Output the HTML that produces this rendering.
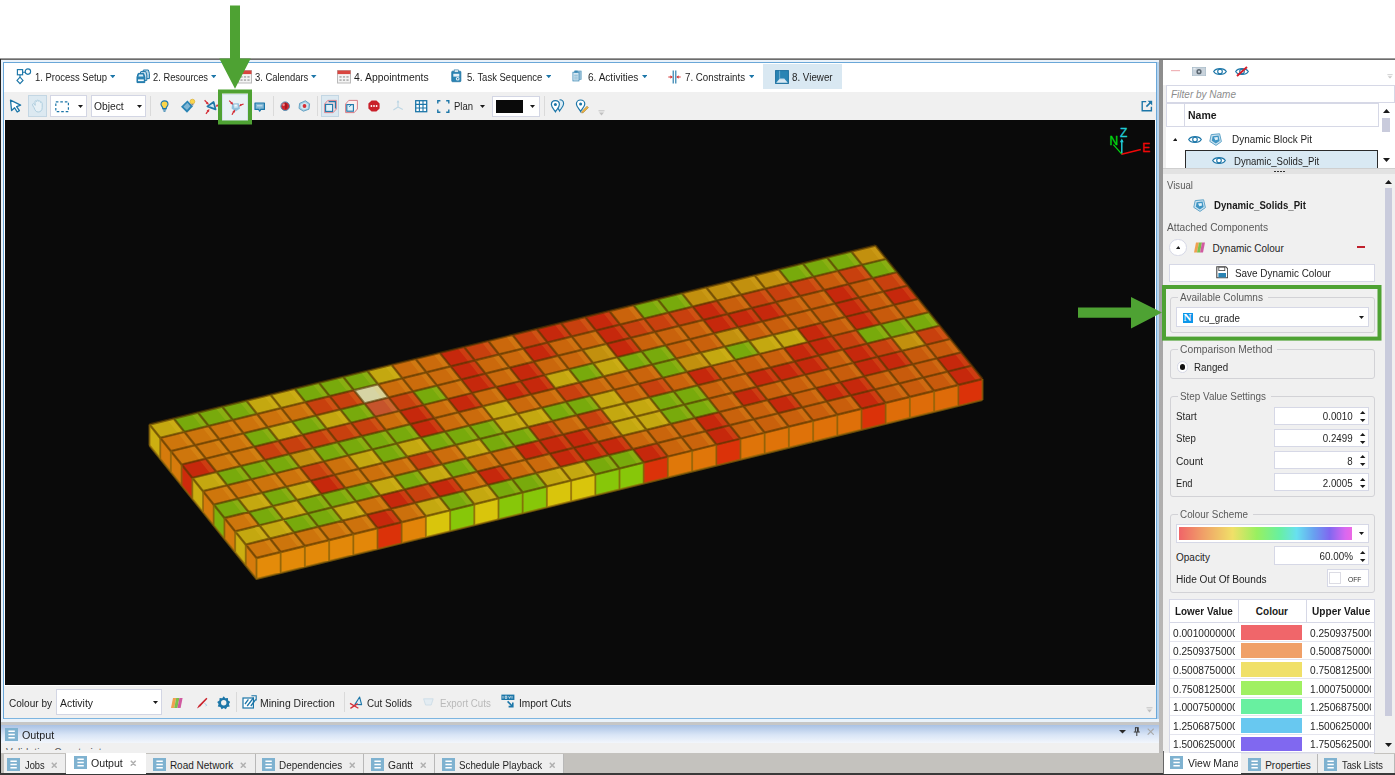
<!DOCTYPE html>
<html lang="en"><head><meta charset="utf-8"><title>Viewer - Dynamic Colour</title>
<style>
html,body{margin:0;padding:0;background:#fff;}
body{width:1395px;height:775px;position:relative;overflow:hidden;font-family:"Liberation Sans",sans-serif;}
.a{position:absolute;display:block;}
.t{position:absolute;white-space:nowrap;display:block;}
</style></head><body>
<div class="a" style="left:0px;top:58px;width:1395px;height:1px;background:#9a9a9a;"></div>
<div class="a" style="left:0px;top:59px;width:1395px;height:1px;background:#6c6c6c;"></div>
<div class="a" style="left:0px;top:59px;width:1px;height:716px;background:#222;"></div>
<div class="a" style="left:0px;top:773px;width:1395px;height:2px;background:#3a3a3a;"></div>
<div class="a" style="left:1px;top:60px;width:1158px;height:662px;background:#eaf2fa;"></div>
<div class="a" style="left:3px;top:62px;width:1154px;height:657px;background:#ffffff;border:1px solid #6aa7d8;box-sizing:border-box;"></div>
<div class="a" style="left:4px;top:92px;width:1152px;height:28px;background:#f0f0f0;"></div>
<div class="a" style="left:4.8px;top:120.4px;width:1150.4px;height:565.1px;background:#0a0a0a;"></div>
<div class="a" style="left:4px;top:685.5px;width:1152px;height:32.5px;background:#f0f0f0;"></div>
<div class="a" style="left:1157px;top:62px;width:2px;height:657px;background:#b6d3ee;"></div>
<div class="a" style="left:1159px;top:60px;width:4.2px;height:693px;background:linear-gradient(#8c8c8c,#a9a8a8 45%,#bebcba)"></div>
<div class="a" style="left:1163px;top:60px;width:232px;height:693px;background:#f0f0f0;"></div>
<div class="a" style="left:1px;top:722px;width:1158px;height:3px;background:#c6c6c6;"></div>
<div class="a" style="left:1px;top:725px;width:1158px;height:18px;background:linear-gradient(#a9c1e4,#d9e5f6 55%,#f2f6fc)"></div>
<div class="a" style="left:1px;top:743px;width:1158px;height:10px;background:#f0f0f0;"></div>
<div class="a" style="left:1px;top:753px;width:1394px;height:20px;background:#c4c2be;"></div>
<div class="a" style="left:763px;top:64px;width:78.5px;height:25px;background:#d9e8f2;"></div>
<span class="t" style="top:71px;line-height:14px;font-size:10px;color:#1e1e1e;left:34.7px;transform-origin:0 50%;transform:scaleX(0.946);">1. Process Setup</span>
<svg class="a" style="left:109.95px;top:74.9px;" width="5.5" height="3.2" viewBox="0 0 5.5 3.2"><path d="M0,0 L5.5,0 L2.75,3.2 Z" fill="#1c76a8"/></svg>
<span class="t" style="top:71px;line-height:14px;font-size:10px;color:#1e1e1e;left:153.3px;transform-origin:0 50%;transform:scaleX(0.934);">2. Resources</span>
<svg class="a" style="left:210.75px;top:74.9px;" width="5.5" height="3.2" viewBox="0 0 5.5 3.2"><path d="M0,0 L5.5,0 L2.75,3.2 Z" fill="#1c76a8"/></svg>
<span class="t" style="top:71px;line-height:14px;font-size:10px;color:#1e1e1e;left:255px;transform-origin:0 50%;transform:scaleX(0.940);">3. Calendars</span>
<svg class="a" style="left:311.25px;top:74.9px;" width="5.5" height="3.2" viewBox="0 0 5.5 3.2"><path d="M0,0 L5.5,0 L2.75,3.2 Z" fill="#1c76a8"/></svg>
<span class="t" style="top:71px;line-height:14px;font-size:10px;color:#1e1e1e;left:354.3px;transform-origin:0 50%;transform:scaleX(1.040);">4. Appointments</span>
<span class="t" style="top:71px;line-height:14px;font-size:10px;color:#1e1e1e;left:466.5px;transform-origin:0 50%;transform:scaleX(0.949);">5. Task Sequence</span>
<svg class="a" style="left:545.75px;top:74.9px;" width="5.5" height="3.2" viewBox="0 0 5.5 3.2"><path d="M0,0 L5.5,0 L2.75,3.2 Z" fill="#1c76a8"/></svg>
<span class="t" style="top:71px;line-height:14px;font-size:10px;color:#1e1e1e;left:587.9px;transform-origin:0 50%;transform:scaleX(1.006);">6. Activities</span>
<svg class="a" style="left:641.85px;top:74.9px;" width="5.5" height="3.2" viewBox="0 0 5.5 3.2"><path d="M0,0 L5.5,0 L2.75,3.2 Z" fill="#1c76a8"/></svg>
<span class="t" style="top:71px;line-height:14px;font-size:10px;color:#1e1e1e;left:685.2px;transform-origin:0 50%;transform:scaleX(0.974);">7. Constraints</span>
<svg class="a" style="left:748.95px;top:74.9px;" width="5.5" height="3.2" viewBox="0 0 5.5 3.2"><path d="M0,0 L5.5,0 L2.75,3.2 Z" fill="#1c76a8"/></svg>
<span class="t" style="top:71px;line-height:14px;font-size:10px;color:#1e1e1e;left:791.7px;transform-origin:0 50%;transform:scaleX(0.978);">8. Viewer</span>
<svg class="a" style="left:16px;top:68px;" width="16" height="17" viewBox="0 0 16 17"><g fill="none" stroke="#1c76a8" stroke-width="1.15"><rect x="1.4" y="1.6" width="5.2" height="5.2"/><circle cx="11.9" cy="3.6" r="2.7"/><path d="M6.6,4.2H9.2M4,6.8V9.2M4,9.2L7,12.4L4,15.6L1,12.4Z"/></g></svg>
<svg class="a" style="left:135.5px;top:69px;" width="14.5" height="14.5" viewBox="0 0 14.5 14.5"><g stroke="#1c76a8" stroke-width="1" stroke-linejoin="round"><path d="M6.4,4.4L7.4,1H12.4L13.4,4.4V9.6H6.4Z" fill="#b9d7e8"/><path d="M3.8,6L4.8,2.6H9.8L10.8,6V11.4H3.8Z" fill="#cfe3f0"/><path d="M1,8L2.2,4.4H7.6L8.8,8V13.6H1Z" fill="#2a84b4"/></g><path d="M2.4,7.6L3,5.6H6.8L7.4,7.6Z" fill="#d9ebf5"/><rect x="2" y="10.4" width="5.8" height="1.7" fill="#f2f8fb"/></svg>
<svg class="a" style="left:237.5px;top:70px;" width="14" height="14" viewBox="0 0 14 14"><rect x="0.5" y="0.5" width="13" height="12.5" fill="#f4f4f4" stroke="#b9b9b9"/><rect x="0.5" y="0.5" width="13" height="3.6" fill="#d8453f"/><g fill="#b5b5b5"><rect x="2.4" y="6" width="2.2" height="1.8"/><rect x="5.9" y="6" width="2.2" height="1.8"/><rect x="9.4" y="6" width="2.2" height="1.8"/><rect x="2.4" y="9.2" width="2.2" height="1.8"/><rect x="5.9" y="9.2" width="2.2" height="1.8"/><rect x="9.4" y="9.2" width="2.2" height="1.8"/></g></svg>
<svg class="a" style="left:337px;top:70px;" width="14" height="14" viewBox="0 0 14 14"><rect x="0.5" y="0.5" width="13" height="12.5" fill="#f4f4f4" stroke="#b9b9b9"/><rect x="0.5" y="0.5" width="13" height="3.6" fill="#d8453f"/><g fill="#b5b5b5"><rect x="2.4" y="6" width="2.2" height="1.8"/><rect x="5.9" y="6" width="2.2" height="1.8"/><rect x="9.4" y="6" width="2.2" height="1.8"/><rect x="2.4" y="9.2" width="2.2" height="1.8"/><rect x="5.9" y="9.2" width="2.2" height="1.8"/><rect x="9.4" y="9.2" width="2.2" height="1.8"/></g></svg>
<svg class="a" style="left:451px;top:69.3px;" width="10.6" height="14" viewBox="0 0 12 15"><rect x="0.8" y="2" width="10.4" height="12" rx="1" fill="#2a84b4" stroke="#1c6f9e" stroke-width="0.8"/><rect x="3.6" y="0.6" width="4.8" height="2.6" fill="#e8f2f8" stroke="#1c6f9e" stroke-width="0.7"/><rect x="2.6" y="5" width="6.8" height="3.2" fill="#e6f0f7"/><circle cx="7.6" cy="10.6" r="2.1" fill="#e6f0f7"/><circle cx="7.6" cy="10.6" r="0.9" fill="#1c6f9e"/></svg>
<svg class="a" style="left:572.3px;top:70.3px;" width="10.6" height="11.8" viewBox="0 0 12 14"><rect x="3.6" y="1.2" width="7" height="10" fill="#9cc3da" stroke="#5b9cbf" stroke-width="0.8"/><rect x="0.8" y="2.6" width="7.2" height="10.4" fill="#d7e8f2" stroke="#3b88b4" stroke-width="0.9"/><rect x="2.4" y="0.8" width="4" height="2.4" fill="#3b88b4"/><path d="M2.3,6.2H6.6M2.3,8.4H6.6M2.3,10.6H6.6" stroke="#5b9cbf" stroke-width="0.8"/></svg>
<svg class="a" style="left:668px;top:70px;" width="13" height="14" viewBox="0 0 13 14"><path d="M5.2,0.5V13.5M7.8,0.5V13.5" stroke="#1c76a8" stroke-width="1.1"/><path d="M0.3,7H4.2M12.7,7H8.8" stroke="#d63a3a" stroke-width="1.1"/><path d="M4.6,7L2.4,5.2V8.8ZM8.4,7L10.6,5.2V8.8Z" fill="#d63a3a"/></svg>
<svg class="a" style="left:774.5px;top:69.5px;" width="14" height="14" viewBox="0 0 14 14"><rect x="0.6" y="0.6" width="12.8" height="12.8" fill="#2a84b4" stroke="#1c6f9e" stroke-width="1"/><path d="M1.2,12.8L4.6,8.8H9.4L12.8,12.8Z" fill="#d9e8f2"/><path d="M4.6,0.8V8.8H9.4" fill="none" stroke="#8fc0dc" stroke-width="0.7"/></svg>
<svg class="a" style="left:9px;top:98.5px;" width="14" height="15" viewBox="0 0 14 15"><path d="M1.5,1.2L11.6,6.2L7.6,7.6L10.4,11.6L8.2,13L5.6,8.8L2.6,11.6Z" fill="#fff" stroke="#1c76a8" stroke-width="1.3" stroke-linejoin="round"/></svg>
<div class="a" style="left:28px;top:95px;width:18.5px;height:21.5px;background:#dce9f1;border:1px solid #c3d6e3;box-sizing:border-box;"></div>
<svg class="a" style="left:31px;top:99px;" width="13" height="14" viewBox="0 0 13 14"><path d="M3,8.5C1.5,6.5 1,5 2.2,4.6C3.2,4.3 3.8,5.6 4.2,6.4L4,2.6C4,1.4 5.6,1.4 5.7,2.6L5.9,1.8C6.1,0.7 7.6,0.9 7.6,2L7.8,2.4C8.1,1.5 9.5,1.7 9.5,2.8L9.6,3.6C10,2.9 11.2,3.1 11.2,4.2V8.6C11.2,11.4 9.6,13 7.2,13C5.2,13 4,11.6 3,8.5Z" fill="#e8f1f6" stroke="#a9cbdc" stroke-width="0.9"/></svg>
<div class="a" style="left:50.2px;top:95.2px;width:37.3px;height:21.5px;background:#ffffff;border:1px solid #d3d6e4;box-sizing:border-box;"></div>
<svg class="a" style="left:55px;top:100.5px;" width="15" height="12" viewBox="0 0 15 12"><rect x="0.8" y="0.8" width="12.6" height="9.8" fill="none" stroke="#1c76a8" stroke-width="1.2" stroke-dasharray="2.6 1.9"/></svg>
<svg class="a" style="left:78px;top:105px;" width="5" height="3" viewBox="0 0 5 3"><path d="M0,0 L5,0 L2.5,3 Z" fill="#1a1a1a"/></svg>
<div class="a" style="left:91px;top:95.2px;width:54.6px;height:21.5px;background:#ffffff;border:1px solid #d3d6e4;box-sizing:border-box;"></div>
<span class="t" style="top:100.2px;line-height:14px;font-size:10px;color:#1e1e1e;left:94px;transform-origin:0 50%;transform:scaleX(1.028);">Object</span>
<svg class="a" style="left:136.7px;top:104.8px;" width="5" height="3" viewBox="0 0 5 3"><path d="M0,0 L5,0 L2.5,3 Z" fill="#1a1a1a"/></svg>
<div class="a" style="left:150.2px;top:96px;width:1px;height:20px;background:#dadada;"></div>
<div class="a" style="left:273.2px;top:96px;width:1px;height:20px;background:#dadada;"></div>
<div class="a" style="left:316.6px;top:96px;width:1px;height:20px;background:#dadada;"></div>
<div class="a" style="left:543.8px;top:96px;width:1px;height:20px;background:#dadada;"></div>
<svg class="a" style="left:159.5px;top:100.3px;" width="9" height="12" viewBox="0 0 9 12"><path d="M4.5,0.9C2.4,0.9 1,2.4 1,4.2C1,5.7 2.1,6.5 2.7,7.6V8.6H6.3V7.6C6.9,6.5 8,5.7 8,4.2C8,2.4 6.6,0.9 4.5,0.9Z" fill="#fbd54a" stroke="#1c76a8" stroke-width="1.1"/><path d="M2.9,9.9H6.1M3.5,11.2H5.5" stroke="#1c76a8" stroke-width="1"/></svg>
<svg class="a" style="left:180px;top:98px;" width="17" height="16" viewBox="0 0 17 16"><path d="M1,8.8L7.4,2.4L13,8.2L7,14.8Z" fill="#2a84b4"/><path d="M3.4,8.8L7.4,4.8L10.4,8.2L7,12Z" fill="#7fb6d5"/><circle cx="12.4" cy="3.6" r="2.4" fill="#fbd54a" stroke="#d4a72a" stroke-width="0.6"/><rect x="11.4" y="5.8" width="2" height="1.6" fill="#8a8a8a"/></svg>
<svg class="a" style="left:202.5px;top:98.5px;" width="17" height="16" viewBox="0 0 17 16"><path d="M4.4,7.4L10.6,3L12.6,10.4Z" fill="#cfe6f3" stroke="#1c76a8" stroke-width="1.7" stroke-linejoin="round"/><g stroke="#d4303a" stroke-width="1.3"><path d="M1.6,1.2L4.6,4.4M16.2,5.8L13.6,6.6M3,14.8L5.2,11.6"/></g><path d="M6,5.8L2.8,4.8L4.8,2.8ZM12.6,7.8L14,5.2L15,7.4ZM6.4,10L6,13.2L3.6,11.6Z" fill="#d4303a"/></svg>
<div class="a" style="left:222px;top:93.5px;width:26px;height:27px;background:#e9f1f5;border:1px solid #d3e3ed;box-sizing:border-box;"></div>
<svg class="a" style="left:226.5px;top:98.5px;" width="18" height="17" viewBox="0 0 18 17"><path d="M5.2,4.4L11.6,4.2L13,9.6L8.6,12.6L4.6,9.4Z" fill="#8fc0dc"/><path d="M6.4,5.4L10.6,5.2L11.2,8.4L7.4,9.2Z" fill="#c4dfee"/><path d="M7.4,5.8L9.8,5.7L9.9,7.3L7.8,7.6Z" fill="#f2f9fc"/><g stroke="#d4303a" stroke-width="1.3"><path d="M2.2,1.6L5,4.4M16.6,5L13.4,6.2M5,15.8L7,12"/></g><path d="M6.4,5.8L3.2,4.8L5.2,2.8ZM12,7.4L13.4,4.8L14.6,6.8ZM8.2,10.6L7.8,13.8L5.4,12.4Z" fill="#d4303a"/></svg>
<svg class="a" style="left:253.5px;top:101.5px;" width="11.5" height="11" viewBox="0 0 11.5 11"><path d="M1,1H10.4V7.4H6.8L5.7,9.2L4.6,7.4H1Z" fill="#7fb6d5" stroke="#1c76a8" stroke-width="1.2" stroke-linejoin="round"/><path d="M3,3.8H8.4" stroke="#d8eaf4" stroke-width="0.9"/></svg>
<svg class="a" style="left:280.3px;top:101px;" width="10.5" height="10.5" viewBox="0 0 10.5 10.5"><circle cx="5.2" cy="5.2" r="4.3" fill="#cf262e" stroke="#4f93ba" stroke-width="1"/><path d="M5.4,1.6C7.6,2.4 7.8,7.2 5.6,8.8C4.6,6.8 4.4,3.6 5.4,1.6Z" fill="#a81820"/><circle cx="3.6" cy="3.8" r="1.2" fill="#ee8c90"/></svg>
<svg class="a" style="left:298.3px;top:100.3px;" width="12.5" height="12" viewBox="0 0 12.5 12"><path d="M1.6,3.4L7.4,0.8L11.6,3.8L11,9.2L5.4,11.2L1,8.4Z" fill="#a9d0e4" stroke="#5b9cbf" stroke-width="0.9" stroke-linejoin="round"/><path d="M3,4.4L7.2,2.6L10,4.6L9.6,8.4L5.6,9.6L2.8,7.8Z" fill="#d3e7f1"/><circle cx="6.5" cy="6" r="1.9" fill="#d62f36"/></svg>
<div class="a" style="left:320.5px;top:95px;width:18.5px;height:21.5px;background:#dce9f1;border:1px solid #c3d6e3;box-sizing:border-box;"></div>
<svg class="a" style="left:322.5px;top:98.5px;" width="15" height="15" viewBox="0 0 15 15"><path d="M1.6,5L4.8,1.4H13.4V10L10.2,13.6H1.6Z" fill="#f4d9dc" stroke="#d4707a" stroke-width="0.8"/><rect x="2.6" y="5.4" width="7" height="7" fill="#dff0f8" stroke="#1c76a8" stroke-width="1.1"/><path d="M5.6,2.6H12.4V9.6" fill="none" stroke="#1c76a8" stroke-width="1.1"/></svg>
<svg class="a" style="left:344px;top:98.5px;" width="15" height="15" viewBox="0 0 15 15"><path d="M1.6,5L4.8,1.4H13.4V10L10.2,13.6H1.6Z" fill="#fbeff0" stroke="#d4707a" stroke-width="0.9"/><rect x="2.8" y="5.6" width="6.6" height="6.6" fill="#dff0f8" stroke="#1c76a8" stroke-width="1.1"/><path d="M5.2,7.8L8,5.2" stroke="#1c76a8" stroke-width="0.9"/></svg>
<svg class="a" style="left:367.5px;top:100px;" width="12" height="12" viewBox="0 0 12 12"><path d="M3.6,0.4H8.4L11.6,3.6V8.4L8.4,11.6H3.6L0.4,8.4V3.6Z" fill="#c9202a"/><circle cx="3.4" cy="6" r="0.9" fill="#fff"/><circle cx="6" cy="6" r="0.9" fill="#fff"/><circle cx="8.6" cy="6" r="0.9" fill="#fff"/></svg>
<svg class="a" style="left:392px;top:100px;" width="12" height="12" viewBox="0 0 12 12"><path d="M6,1V7M6,7L1.4,10M6,7L10.8,9.4" stroke="#bcd6e4" stroke-width="1.1" fill="none"/><path d="M6,0L4.6,2.4H7.4Z" fill="#bcd6e4"/></svg>
<svg class="a" style="left:415px;top:100px;" width="12.5" height="12.5" viewBox="0 0 12.5 12.5"><rect x="0.7" y="0.7" width="11" height="11" fill="#fff" stroke="#1c76a8" stroke-width="1.3"/><path d="M4.4,0.7V11.7M8,0.7V11.7M0.7,4.4H11.7M0.7,8H11.7" stroke="#1c76a8" stroke-width="1.1"/></svg>
<svg class="a" style="left:437px;top:100px;" width="12.5" height="13" viewBox="0 0 12.5 13"><path d="M3.4,0.8H0.8V3.6M9.2,0.8H11.8V3.6M3.4,12.2H0.8V9.4M9.2,12.2H11.8V9.4" fill="none" stroke="#1c76a8" stroke-width="1.4"/></svg>
<span class="t" style="top:100.2px;line-height:14px;font-size:10px;color:#1e1e1e;left:454px;transform-origin:0 50%;transform:scaleX(0.949);">Plan</span>
<svg class="a" style="left:479.5px;top:104.8px;" width="5" height="3" viewBox="0 0 5 3"><path d="M0,0 L5,0 L2.5,3 Z" fill="#1a1a1a"/></svg>
<div class="a" style="left:492px;top:95.5px;width:47.5px;height:21px;background:#ffffff;border:1px solid #d3d6e4;box-sizing:border-box;"></div>
<div class="a" style="left:495.5px;top:99.5px;width:27.5px;height:13.5px;background:#0a0a0a;"></div>
<svg class="a" style="left:529.8px;top:104.8px;" width="5" height="3" viewBox="0 0 5 3"><path d="M0,0 L5,0 L2.5,3 Z" fill="#1a1a1a"/></svg>
<svg class="a" style="left:549.5px;top:99px;" width="15" height="14" viewBox="0 0 15 14"><path d="M9.6,0.8C12,0.8 13.6,2.6 13.6,4.8C13.6,7.4 10.8,9.8 9.6,12C9,10.6 8.4,10 7.8,9.2" fill="#dcecf5" stroke="#1c76a8" stroke-width="1.1"/><path d="M5.4,1.6C7.8,1.6 9.4,3.4 9.4,5.6C9.4,8.2 6.6,10.6 5.4,12.8C4.2,10.6 1.4,8.2 1.4,5.6C1.4,3.4 3,1.6 5.4,1.6Z" fill="#fff" stroke="#1c76a8" stroke-width="1.2"/><circle cx="5.4" cy="5.4" r="1.5" fill="#1c76a8"/></svg>
<svg class="a" style="left:575px;top:98.5px;" width="14" height="15" viewBox="0 0 14 15"><path d="M5.6,1C8,1 9.8,2.8 9.8,5C9.8,7.6 6.8,10.2 5.6,12.6C4.4,10.2 1.4,7.6 1.4,5C1.4,2.8 3.2,1 5.6,1Z" fill="#fff" stroke="#1c76a8" stroke-width="1.2"/><circle cx="5.6" cy="5" r="1.5" fill="#1c76a8"/><path d="M7,12.4L12,7.2L13.4,8.6L8.4,13.6L6.6,14Z" fill="#f0b43c" stroke="#8a6a2a" stroke-width="0.5"/></svg>
<svg class="a" style="left:598px;top:109.5px;" width="7" height="6" viewBox="0 0 7 6"><path d="M0.5,0.8H6.5" stroke="#c0c0c0" stroke-width="1"/><path d="M1,2.6H6L3.5,5.4Z" fill="#c0c0c0"/></svg>
<svg class="a" style="left:1140.5px;top:100px;" width="12" height="12" viewBox="0 0 12 12"><path d="M5.2,1.6H1.2V10.8H10.4V6.8" fill="none" stroke="#1c76a8" stroke-width="1.4"/><path d="M5.4,6.6L10.2,1.8" stroke="#1c76a8" stroke-width="1.6"/><path d="M6.6,0.8H11.2V5.4Z" fill="#1c76a8"/></svg>
<svg class="a" style="left:0;top:0" width="1160" height="700" viewBox="0 0 1160 700">
<g stroke-linejoin="round" style="filter:blur(0.35px)">
<polygon points="149.5,424.5 173.7,418.5 184.4,431.9 160.2,437.9" fill="#c4a810" />
<polygon points="173.7,418.5 197.9,412.6 208.6,425.9 184.4,431.9" fill="#78aa0c" />
<polygon points="197.9,412.6 222.1,406.6 232.8,420.0 208.6,425.9" fill="#78aa0c" />
<polygon points="222.1,406.6 246.3,400.6 257.0,414.0 232.8,420.0" fill="#78aa0c" />
<polygon points="246.3,400.6 270.5,394.7 281.2,408.0 257.0,414.0" fill="#c4a810" />
<polygon points="270.5,394.7 294.7,388.7 305.4,402.1 281.2,408.0" fill="#c4a810" />
<polygon points="294.7,388.7 318.9,382.7 329.6,396.1 305.4,402.1" fill="#78aa0c" />
<polygon points="318.9,382.7 343.1,376.8 353.8,390.1 329.6,396.1" fill="#78aa0c" />
<polygon points="343.1,376.8 367.3,370.8 378.0,384.2 353.8,390.1" fill="#78aa0c" />
<polygon points="367.3,370.8 391.5,364.8 402.2,378.2 378.0,384.2" fill="#c4a810" />
<polygon points="391.5,364.8 415.7,358.9 426.4,372.2 402.2,378.2" fill="#cb6c0c" />
<polygon points="415.7,358.9 439.9,352.9 450.6,366.2 426.4,372.2" fill="#cb6b0c" />
<polygon points="439.9,352.9 464.1,346.9 474.8,360.3 450.6,366.2" fill="#c6280c" />
<polygon points="464.1,346.9 488.3,341.0 499.0,354.3 474.8,360.3" fill="#c8400e" />
<polygon points="488.3,341.0 512.5,335.0 523.2,348.4 499.0,354.3" fill="#cb680c" />
<polygon points="512.5,335.0 536.7,329.0 547.4,342.4 523.2,348.4" fill="#c8400e" />
<polygon points="536.7,329.0 560.9,323.1 571.6,336.4 547.4,342.4" fill="#c6280c" />
<polygon points="560.9,323.1 585.1,317.1 595.8,330.5 571.6,336.4" fill="#c8400e" />
<polygon points="585.1,317.1 609.3,311.1 620.0,324.5 595.8,330.5" fill="#c6280c" />
<polygon points="609.3,311.1 633.5,305.2 644.2,318.5 620.0,324.5" fill="#ca630c" />
<polygon points="633.5,305.2 657.7,299.2 668.4,312.6 644.2,318.5" fill="#78aa0c" />
<polygon points="657.7,299.2 681.9,293.2 692.6,306.6 668.4,312.6" fill="#78aa0c" />
<polygon points="681.9,293.2 706.1,287.3 716.8,300.6 692.6,306.6" fill="#c2900e" />
<polygon points="706.1,287.3 730.3,281.3 741.0,294.7 716.8,300.6" fill="#c2900e" />
<polygon points="730.3,281.3 754.5,275.3 765.2,288.7 741.0,294.7" fill="#c2900e" />
<polygon points="754.5,275.3 778.7,269.4 789.4,282.7 765.2,288.7" fill="#c2900e" />
<polygon points="778.7,269.4 802.9,263.4 813.6,276.8 789.4,282.7" fill="#78aa0c" />
<polygon points="802.9,263.4 827.1,257.4 837.8,270.8 813.6,276.8" fill="#78aa0c" />
<polygon points="827.1,257.4 851.3,251.5 862.0,264.8 837.8,270.8" fill="#78aa0c" />
<polygon points="851.3,251.5 875.5,245.5 886.2,258.9 862.0,264.8" fill="#c2900e" />
<polygon points="160.2,437.9 184.4,431.9 195.1,445.2 170.9,451.2" fill="#ce760c" />
<polygon points="184.4,431.9 208.6,425.9 219.3,439.3 195.1,445.2" fill="#cd750c" />
<polygon points="208.6,425.9 232.8,420.0 243.5,433.3 219.3,439.3" fill="#cd740c" />
<polygon points="232.8,420.0 257.0,414.0 267.7,427.3 243.5,433.3" fill="#cd730c" />
<polygon points="257.0,414.0 281.2,408.0 291.9,421.4 267.7,427.3" fill="#cd720c" />
<polygon points="281.2,408.0 305.4,402.1 316.1,415.4 291.9,421.4" fill="#cc710c" />
<polygon points="305.4,402.1 329.6,396.1 340.3,409.4 316.1,415.4" fill="#c8400e" />
<polygon points="329.6,396.1 353.8,390.1 364.5,403.5 340.3,409.4" fill="#c8400e" />
<polygon points="353.8,390.1 378.0,384.2 388.7,397.5 364.5,403.5" fill="#d6d4a4" />
<polygon points="378.0,384.2 402.2,378.2 412.9,391.5 388.7,397.5" fill="#cc6d0c" />
<polygon points="402.2,378.2 426.4,372.2 437.1,385.6 412.9,391.5" fill="#cb6c0c" />
<polygon points="426.4,372.2 450.6,366.2 461.3,379.6 437.1,385.6" fill="#cb6b0c" />
<polygon points="450.6,366.2 474.8,360.3 485.5,373.6 461.3,379.6" fill="#c6280c" />
<polygon points="474.8,360.3 499.0,354.3 509.7,367.7 485.5,373.6" fill="#cb690c" />
<polygon points="499.0,354.3 523.2,348.4 533.9,361.7 509.7,367.7" fill="#cb680c" />
<polygon points="523.2,348.4 547.4,342.4 558.1,355.7 533.9,361.7" fill="#c6280c" />
<polygon points="547.4,342.4 571.6,336.4 582.3,349.8 558.1,355.7" fill="#ca660c" />
<polygon points="571.6,336.4 595.8,330.5 606.5,343.8 582.3,349.8" fill="#ca650c" />
<polygon points="595.8,330.5 620.0,324.5 630.7,337.8 606.5,343.8" fill="#c6280c" />
<polygon points="620.0,324.5 644.2,318.5 654.9,331.9 630.7,337.8" fill="#c8400e" />
<polygon points="644.2,318.5 668.4,312.6 679.1,325.9 654.9,331.9" fill="#c8400e" />
<polygon points="668.4,312.6 692.6,306.6 703.3,319.9 679.1,325.9" fill="#c8400e" />
<polygon points="692.6,306.6 716.8,300.6 727.5,314.0 703.3,319.9" fill="#c6280c" />
<polygon points="716.8,300.6 741.0,294.7 751.7,308.0 727.5,314.0" fill="#c95f0c" />
<polygon points="741.0,294.7 765.2,288.7 775.9,302.0 751.7,308.0" fill="#c8400e" />
<polygon points="765.2,288.7 789.4,282.7 800.1,296.1 775.9,302.0" fill="#c8400e" />
<polygon points="789.4,282.7 813.6,276.8 824.3,290.1 800.1,296.1" fill="#c8400e" />
<polygon points="813.6,276.8 837.8,270.8 848.5,284.1 824.3,290.1" fill="#c85b0c" />
<polygon points="837.8,270.8 862.0,264.8 872.7,278.2 848.5,284.1" fill="#c8400e" />
<polygon points="862.0,264.8 886.2,258.9 896.9,272.2 872.7,278.2" fill="#78aa0c" />
<polygon points="170.9,451.2 195.1,445.2 205.8,458.6 181.6,464.6" fill="#ce760c" />
<polygon points="195.1,445.2 219.3,439.3 230.0,452.6 205.8,458.6" fill="#cd750c" />
<polygon points="219.3,439.3 243.5,433.3 254.2,446.7 230.0,452.6" fill="#cd740c" />
<polygon points="243.5,433.3 267.7,427.3 278.4,440.7 254.2,446.7" fill="#78aa0c" />
<polygon points="267.7,427.3 291.9,421.4 302.6,434.7 278.4,440.7" fill="#c4a810" />
<polygon points="291.9,421.4 316.1,415.4 326.8,428.8 302.6,434.7" fill="#78aa0c" />
<polygon points="316.1,415.4 340.3,409.4 351.0,422.8 326.8,428.8" fill="#c4a810" />
<polygon points="340.3,409.4 364.5,403.5 375.2,416.8 351.0,422.8" fill="#78aa0c" />
<polygon points="364.5,403.5 388.7,397.5 399.4,410.9 375.2,416.8" fill="#c6542c" />
<polygon points="388.7,397.5 412.9,391.5 423.6,404.9 399.4,410.9" fill="#c8400e" />
<polygon points="412.9,391.5 437.1,385.6 447.8,398.9 423.6,404.9" fill="#78aa0c" />
<polygon points="437.1,385.6 461.3,379.6 472.0,392.9 447.8,398.9" fill="#cb6b0c" />
<polygon points="461.3,379.6 485.5,373.6 496.2,387.0 472.0,392.9" fill="#c6280c" />
<polygon points="485.5,373.6 509.7,367.7 520.4,381.0 496.2,387.0" fill="#cb690c" />
<polygon points="509.7,367.7 533.9,361.7 544.6,375.1 520.4,381.0" fill="#c6280c" />
<polygon points="533.9,361.7 558.1,355.7 568.8,369.1 544.6,375.1" fill="#ca670c" />
<polygon points="558.1,355.7 582.3,349.8 593.0,363.1 568.8,369.1" fill="#ca660c" />
<polygon points="582.3,349.8 606.5,343.8 617.2,357.2 593.0,363.1" fill="#c2900e" />
<polygon points="606.5,343.8 630.7,337.8 641.4,351.2 617.2,357.2" fill="#c6280c" />
<polygon points="630.7,337.8 654.9,331.9 665.6,345.2 641.4,351.2" fill="#ca630c" />
<polygon points="654.9,331.9 679.1,325.9 689.8,339.2 665.6,345.2" fill="#c9620c" />
<polygon points="679.1,325.9 703.3,319.9 714.0,333.3 689.8,339.2" fill="#c9610c" />
<polygon points="703.3,319.9 727.5,314.0 738.2,327.3 714.0,333.3" fill="#c6280c" />
<polygon points="727.5,314.0 751.7,308.0 762.4,321.4 738.2,327.3" fill="#c6280c" />
<polygon points="751.7,308.0 775.9,302.0 786.6,315.4 762.4,321.4" fill="#c6280c" />
<polygon points="775.9,302.0 800.1,296.1 810.8,309.4 786.6,315.4" fill="#c85d0c" />
<polygon points="800.1,296.1 824.3,290.1 835.0,303.4 810.8,309.4" fill="#c85c0c" />
<polygon points="824.3,290.1 848.5,284.1 859.2,297.5 835.0,303.4" fill="#c6280c" />
<polygon points="848.5,284.1 872.7,278.2 883.4,291.5 859.2,297.5" fill="#c85a0c" />
<polygon points="872.7,278.2 896.9,272.2 907.6,285.6 883.4,291.5" fill="#c8400e" />
<polygon points="181.6,464.6 205.8,458.6 216.5,471.9 192.3,477.9" fill="#c6280c" />
<polygon points="205.8,458.6 230.0,452.6 240.7,466.0 216.5,471.9" fill="#cd750c" />
<polygon points="230.0,452.6 254.2,446.7 264.9,460.0 240.7,466.0" fill="#cd740c" />
<polygon points="254.2,446.7 278.4,440.7 289.1,454.0 264.9,460.0" fill="#c8400e" />
<polygon points="278.4,440.7 302.6,434.7 313.3,448.1 289.1,454.0" fill="#c8400e" />
<polygon points="302.6,434.7 326.8,428.8 337.5,442.1 313.3,448.1" fill="#c8400e" />
<polygon points="326.8,428.8 351.0,422.8 361.7,436.1 337.5,442.1" fill="#c8400e" />
<polygon points="351.0,422.8 375.2,416.8 385.9,430.2 361.7,436.1" fill="#c8400e" />
<polygon points="375.2,416.8 399.4,410.9 410.1,424.2 385.9,430.2" fill="#cc6e0c" />
<polygon points="399.4,410.9 423.6,404.9 434.3,418.2 410.1,424.2" fill="#c6280c" />
<polygon points="423.6,404.9 447.8,398.9 458.5,412.3 434.3,418.2" fill="#cb6c0c" />
<polygon points="447.8,398.9 472.0,392.9 482.7,406.3 458.5,412.3" fill="#c6280c" />
<polygon points="472.0,392.9 496.2,387.0 506.9,400.3 482.7,406.3" fill="#cb6a0c" />
<polygon points="496.2,387.0 520.4,381.0 531.1,394.4 506.9,400.3" fill="#c6280c" />
<polygon points="520.4,381.0 544.6,375.1 555.3,388.4 531.1,394.4" fill="#c6280c" />
<polygon points="544.6,375.1 568.8,369.1 579.5,382.4 555.3,388.4" fill="#c4a810" />
<polygon points="568.8,369.1 593.0,363.1 603.7,376.5 579.5,382.4" fill="#78aa0c" />
<polygon points="593.0,363.1 617.2,357.2 627.9,370.5 603.7,376.5" fill="#c4a810" />
<polygon points="617.2,357.2 641.4,351.2 652.1,364.5 627.9,370.5" fill="#78aa0c" />
<polygon points="641.4,351.2 665.6,345.2 676.3,358.6 652.1,364.5" fill="#78aa0c" />
<polygon points="665.6,345.2 689.8,339.2 700.5,352.6 676.3,358.6" fill="#c9620c" />
<polygon points="689.8,339.2 714.0,333.3 724.7,346.6 700.5,352.6" fill="#c9610c" />
<polygon points="714.0,333.3 738.2,327.3 748.9,340.7 724.7,346.6" fill="#c2900e" />
<polygon points="738.2,327.3 762.4,321.4 773.1,334.7 748.9,340.7" fill="#c95f0c" />
<polygon points="762.4,321.4 786.6,315.4 797.3,328.7 773.1,334.7" fill="#c95e0c" />
<polygon points="786.6,315.4 810.8,309.4 821.5,322.8 797.3,328.7" fill="#c85d0c" />
<polygon points="810.8,309.4 835.0,303.4 845.7,316.8 821.5,322.8" fill="#c85c0c" />
<polygon points="835.0,303.4 859.2,297.5 869.9,310.8 845.7,316.8" fill="#c6280c" />
<polygon points="859.2,297.5 883.4,291.5 894.1,304.9 869.9,310.8" fill="#c85a0c" />
<polygon points="883.4,291.5 907.6,285.6 918.3,298.9 894.1,304.9" fill="#c6280c" />
<polygon points="192.3,477.9 216.5,471.9 227.2,485.3 203.0,491.2" fill="#c4a810" />
<polygon points="216.5,471.9 240.7,466.0 251.4,479.3 227.2,485.3" fill="#78aa0c" />
<polygon points="240.7,466.0 264.9,460.0 275.6,473.4 251.4,479.3" fill="#78aa0c" />
<polygon points="264.9,460.0 289.1,454.0 299.8,467.4 275.6,473.4" fill="#78aa0c" />
<polygon points="289.1,454.0 313.3,448.1 324.0,461.4 299.8,467.4" fill="#c2900e" />
<polygon points="313.3,448.1 337.5,442.1 348.2,455.4 324.0,461.4" fill="#78aa0c" />
<polygon points="337.5,442.1 361.7,436.1 372.4,449.5 348.2,455.4" fill="#78aa0c" />
<polygon points="361.7,436.1 385.9,430.2 396.6,443.5 372.4,449.5" fill="#78aa0c" />
<polygon points="385.9,430.2 410.1,424.2 420.8,437.6 396.6,443.5" fill="#78aa0c" />
<polygon points="410.1,424.2 434.3,418.2 445.0,431.6 420.8,437.6" fill="#c6280c" />
<polygon points="434.3,418.2 458.5,412.3 469.2,425.6 445.0,431.6" fill="#cb6c0c" />
<polygon points="458.5,412.3 482.7,406.3 493.4,419.6 469.2,425.6" fill="#cb6b0c" />
<polygon points="482.7,406.3 506.9,400.3 517.6,413.7 493.4,419.6" fill="#c4a810" />
<polygon points="506.9,400.3 531.1,394.4 541.8,407.7 517.6,413.7" fill="#cb690c" />
<polygon points="531.1,394.4 555.3,388.4 566.0,401.8 541.8,407.7" fill="#cb680c" />
<polygon points="555.3,388.4 579.5,382.4 590.2,395.8 566.0,401.8" fill="#c8400e" />
<polygon points="579.5,382.4 603.7,376.5 614.4,389.8 590.2,395.8" fill="#ca660c" />
<polygon points="603.7,376.5 627.9,370.5 638.6,383.9 614.4,389.8" fill="#ca650c" />
<polygon points="627.9,370.5 652.1,364.5 662.8,377.9 638.6,383.9" fill="#ca640c" />
<polygon points="652.1,364.5 676.3,358.6 687.0,371.9 662.8,377.9" fill="#78aa0c" />
<polygon points="676.3,358.6 700.5,352.6 711.2,365.9 687.0,371.9" fill="#c2900e" />
<polygon points="700.5,352.6 724.7,346.6 735.4,360.0 711.2,365.9" fill="#c4a810" />
<polygon points="724.7,346.6 748.9,340.7 759.6,354.0 735.4,360.0" fill="#78aa0c" />
<polygon points="748.9,340.7 773.1,334.7 783.8,348.1 759.6,354.0" fill="#c4a810" />
<polygon points="773.1,334.7 797.3,328.7 808.0,342.1 783.8,348.1" fill="#c4a810" />
<polygon points="797.3,328.7 821.5,322.8 832.2,336.1 808.0,342.1" fill="#c6280c" />
<polygon points="821.5,322.8 845.7,316.8 856.4,330.1 832.2,336.1" fill="#c85c0c" />
<polygon points="845.7,316.8 869.9,310.8 880.6,324.2 856.4,330.1" fill="#c6280c" />
<polygon points="869.9,310.8 894.1,304.9 904.8,318.2 880.6,324.2" fill="#c85a0c" />
<polygon points="894.1,304.9 918.3,298.9 929.0,312.2 904.8,318.2" fill="#c85a0c" />
<polygon points="203.0,491.2 227.2,485.3 237.9,498.6 213.7,504.6" fill="#ce760c" />
<polygon points="227.2,485.3 251.4,479.3 262.1,492.7 237.9,498.6" fill="#cd750c" />
<polygon points="251.4,479.3 275.6,473.4 286.3,486.7 262.1,492.7" fill="#cd740c" />
<polygon points="275.6,473.4 299.8,467.4 310.5,480.7 286.3,486.7" fill="#cd730c" />
<polygon points="299.8,467.4 324.0,461.4 334.7,474.8 310.5,480.7" fill="#c8400e" />
<polygon points="324.0,461.4 348.2,455.4 358.9,468.8 334.7,474.8" fill="#cc710c" />
<polygon points="348.2,455.4 372.4,449.5 383.1,462.8 358.9,468.8" fill="#c4a810" />
<polygon points="372.4,449.5 396.6,443.5 407.3,456.9 383.1,462.8" fill="#78aa0c" />
<polygon points="396.6,443.5 420.8,437.6 431.5,450.9 407.3,456.9" fill="#c4a810" />
<polygon points="420.8,437.6 445.0,431.6 455.7,444.9 431.5,450.9" fill="#78aa0c" />
<polygon points="445.0,431.6 469.2,425.6 479.9,439.0 455.7,444.9" fill="#78aa0c" />
<polygon points="469.2,425.6 493.4,419.6 504.1,433.0 479.9,439.0" fill="#78aa0c" />
<polygon points="493.4,419.6 517.6,413.7 528.3,427.0 504.1,433.0" fill="#c4a810" />
<polygon points="517.6,413.7 541.8,407.7 552.5,421.1 528.3,427.0" fill="#c4a810" />
<polygon points="541.8,407.7 566.0,401.8 576.7,415.1 552.5,421.1" fill="#78aa0c" />
<polygon points="566.0,401.8 590.2,395.8 600.9,409.1 576.7,415.1" fill="#78aa0c" />
<polygon points="590.2,395.8 614.4,389.8 625.1,403.2 600.9,409.1" fill="#c4a810" />
<polygon points="614.4,389.8 638.6,383.9 649.3,397.2 625.1,403.2" fill="#ca650c" />
<polygon points="638.6,383.9 662.8,377.9 673.5,391.2 649.3,397.2" fill="#c8400e" />
<polygon points="662.8,377.9 687.0,371.9 697.7,385.3 673.5,391.2" fill="#ca630c" />
<polygon points="687.0,371.9 711.2,365.9 721.9,379.3 697.7,385.3" fill="#c6280c" />
<polygon points="711.2,365.9 735.4,360.0 746.1,373.3 721.9,379.3" fill="#c9610c" />
<polygon points="735.4,360.0 759.6,354.0 770.3,367.4 746.1,373.3" fill="#c9600c" />
<polygon points="759.6,354.0 783.8,348.1 794.5,361.4 770.3,367.4" fill="#c95f0c" />
<polygon points="783.8,348.1 808.0,342.1 818.7,355.4 794.5,361.4" fill="#c6280c" />
<polygon points="808.0,342.1 832.2,336.1 842.9,349.5 818.7,355.4" fill="#c6280c" />
<polygon points="832.2,336.1 856.4,330.1 867.1,343.5 842.9,349.5" fill="#c8400e" />
<polygon points="856.4,330.1 880.6,324.2 891.3,337.5 867.1,343.5" fill="#78aa0c" />
<polygon points="880.6,324.2 904.8,318.2 915.5,331.6 891.3,337.5" fill="#78aa0c" />
<polygon points="904.8,318.2 929.0,312.2 939.7,325.6 915.5,331.6" fill="#78aa0c" />
<polygon points="213.7,504.6 237.9,498.6 248.6,512.0 224.4,518.0" fill="#78aa0c" />
<polygon points="237.9,498.6 262.1,492.7 272.8,506.0 248.6,512.0" fill="#c4a810" />
<polygon points="262.1,492.7 286.3,486.7 297.0,500.1 272.8,506.0" fill="#78aa0c" />
<polygon points="286.3,486.7 310.5,480.7 321.2,494.1 297.0,500.1" fill="#c4a810" />
<polygon points="310.5,480.7 334.7,474.8 345.4,488.1 321.2,494.1" fill="#c6280c" />
<polygon points="334.7,474.8 358.9,468.8 369.6,482.1 345.4,488.1" fill="#cc710c" />
<polygon points="358.9,468.8 383.1,462.8 393.8,476.2 369.6,482.1" fill="#cc700c" />
<polygon points="383.1,462.8 407.3,456.9 418.0,470.2 393.8,476.2" fill="#cc6f0c" />
<polygon points="407.3,456.9 431.5,450.9 442.2,464.2 418.0,470.2" fill="#c8400e" />
<polygon points="431.5,450.9 455.7,444.9 466.4,458.3 442.2,464.2" fill="#cc6d0c" />
<polygon points="455.7,444.9 479.9,439.0 490.6,452.3 466.4,458.3" fill="#c4a810" />
<polygon points="479.9,439.0 504.1,433.0 514.8,446.3 490.6,452.3" fill="#78aa0c" />
<polygon points="504.1,433.0 528.3,427.0 539.0,440.4 514.8,446.3" fill="#78aa0c" />
<polygon points="528.3,427.0 552.5,421.1 563.2,434.4 539.0,440.4" fill="#c8400e" />
<polygon points="552.5,421.1 576.7,415.1 587.4,428.4 563.2,434.4" fill="#cb680c" />
<polygon points="576.7,415.1 600.9,409.1 611.6,422.5 587.4,428.4" fill="#c8400e" />
<polygon points="600.9,409.1 625.1,403.2 635.8,416.5 611.6,422.5" fill="#c4a810" />
<polygon points="625.1,403.2 649.3,397.2 660.0,410.6 635.8,416.5" fill="#c4a810" />
<polygon points="649.3,397.2 673.5,391.2 684.2,404.6 660.0,410.6" fill="#78aa0c" />
<polygon points="673.5,391.2 697.7,385.3 708.4,398.6 684.2,404.6" fill="#78aa0c" />
<polygon points="697.7,385.3 721.9,379.3 732.6,392.6 708.4,398.6" fill="#c9620c" />
<polygon points="721.9,379.3 746.1,373.3 756.8,386.7 732.6,392.6" fill="#c9610c" />
<polygon points="746.1,373.3 770.3,367.4 781.0,380.7 756.8,386.7" fill="#c6280c" />
<polygon points="770.3,367.4 794.5,361.4 805.2,374.8 781.0,380.7" fill="#c6280c" />
<polygon points="794.5,361.4 818.7,355.4 829.4,368.8 805.2,374.8" fill="#c6280c" />
<polygon points="818.7,355.4 842.9,349.5 853.6,362.8 829.4,368.8" fill="#c85d0c" />
<polygon points="842.9,349.5 867.1,343.5 877.8,356.8 853.6,362.8" fill="#c6280c" />
<polygon points="867.1,343.5 891.3,337.5 902.0,350.9 877.8,356.8" fill="#c8400e" />
<polygon points="891.3,337.5 915.5,331.6 926.2,344.9 902.0,350.9" fill="#c2900e" />
<polygon points="915.5,331.6 939.7,325.6 950.4,338.9 926.2,344.9" fill="#c8400e" />
<polygon points="224.4,518.0 248.6,512.0 259.3,525.3 235.1,531.3" fill="#ce760c" />
<polygon points="248.6,512.0 272.8,506.0 283.5,519.4 259.3,525.3" fill="#78aa0c" />
<polygon points="272.8,506.0 297.0,500.1 307.7,513.4 283.5,519.4" fill="#c4a810" />
<polygon points="297.0,500.1 321.2,494.1 331.9,507.4 307.7,513.4" fill="#78aa0c" />
<polygon points="321.2,494.1 345.4,488.1 356.1,501.5 331.9,507.4" fill="#78aa0c" />
<polygon points="345.4,488.1 369.6,482.1 380.3,495.5 356.1,501.5" fill="#78aa0c" />
<polygon points="369.6,482.1 393.8,476.2 404.5,489.5 380.3,495.5" fill="#c4a810" />
<polygon points="393.8,476.2 418.0,470.2 428.7,483.6 404.5,489.5" fill="#78aa0c" />
<polygon points="418.0,470.2 442.2,464.2 452.9,477.6 428.7,483.6" fill="#c4a810" />
<polygon points="442.2,464.2 466.4,458.3 477.1,471.6 452.9,477.6" fill="#78aa0c" />
<polygon points="466.4,458.3 490.6,452.3 501.3,465.7 477.1,471.6" fill="#cb6c0c" />
<polygon points="490.6,452.3 514.8,446.3 525.5,459.7 501.3,465.7" fill="#cb6b0c" />
<polygon points="514.8,446.3 539.0,440.4 549.7,453.7 525.5,459.7" fill="#c6280c" />
<polygon points="539.0,440.4 563.2,434.4 573.9,447.8 549.7,453.7" fill="#c6280c" />
<polygon points="563.2,434.4 587.4,428.4 598.1,441.8 573.9,447.8" fill="#c6280c" />
<polygon points="587.4,428.4 611.6,422.5 622.3,435.8 598.1,441.8" fill="#ca670c" />
<polygon points="611.6,422.5 635.8,416.5 646.5,429.9 622.3,435.8" fill="#c4a810" />
<polygon points="635.8,416.5 660.0,410.6 670.7,423.9 646.5,429.9" fill="#c4a810" />
<polygon points="660.0,410.6 684.2,404.6 694.9,417.9 670.7,423.9" fill="#78aa0c" />
<polygon points="684.2,404.6 708.4,398.6 719.1,412.0 694.9,417.9" fill="#78aa0c" />
<polygon points="708.4,398.6 732.6,392.6 743.3,406.0 719.1,412.0" fill="#c9620c" />
<polygon points="732.6,392.6 756.8,386.7 767.5,400.0 743.3,406.0" fill="#c6280c" />
<polygon points="756.8,386.7 781.0,380.7 791.7,394.1 767.5,400.0" fill="#c9600c" />
<polygon points="781.0,380.7 805.2,374.8 815.9,388.1 791.7,394.1" fill="#c95f0c" />
<polygon points="805.2,374.8 829.4,368.8 840.1,382.1 815.9,388.1" fill="#c95e0c" />
<polygon points="829.4,368.8 853.6,362.8 864.3,376.2 840.1,382.1" fill="#c85d0c" />
<polygon points="853.6,362.8 877.8,356.8 888.5,370.2 864.3,376.2" fill="#c6280c" />
<polygon points="877.8,356.8 902.0,350.9 912.7,364.2 888.5,370.2" fill="#c6280c" />
<polygon points="902.0,350.9 926.2,344.9 936.9,358.3 912.7,364.2" fill="#c85a0c" />
<polygon points="926.2,344.9 950.4,338.9 961.1,352.3 936.9,358.3" fill="#c85a0c" />
<polygon points="235.1,531.3 259.3,525.3 270.0,538.7 245.8,544.6" fill="#c4a810" />
<polygon points="259.3,525.3 283.5,519.4 294.2,532.7 270.0,538.7" fill="#c4a810" />
<polygon points="283.5,519.4 307.7,513.4 318.4,526.8 294.2,532.7" fill="#78aa0c" />
<polygon points="307.7,513.4 331.9,507.4 342.6,520.8 318.4,526.8" fill="#78aa0c" />
<polygon points="331.9,507.4 356.1,501.5 366.8,514.8 342.6,520.8" fill="#c4a810" />
<polygon points="356.1,501.5 380.3,495.5 391.0,508.8 366.8,514.8" fill="#cc710c" />
<polygon points="380.3,495.5 404.5,489.5 415.2,502.9 391.0,508.8" fill="#c6280c" />
<polygon points="404.5,489.5 428.7,483.6 439.4,496.9 415.2,502.9" fill="#c8400e" />
<polygon points="428.7,483.6 452.9,477.6 463.6,490.9 439.4,496.9" fill="#c6280c" />
<polygon points="452.9,477.6 477.1,471.6 487.8,485.0 463.6,490.9" fill="#cc6d0c" />
<polygon points="477.1,471.6 501.3,465.7 512.0,479.0 487.8,485.0" fill="#c6280c" />
<polygon points="501.3,465.7 525.5,459.7 536.2,473.0 512.0,479.0" fill="#cb6b0c" />
<polygon points="525.5,459.7 549.7,453.7 560.4,467.1 536.2,473.0" fill="#cb6a0c" />
<polygon points="549.7,453.7 573.9,447.8 584.6,461.1 560.4,467.1" fill="#c6280c" />
<polygon points="573.9,447.8 598.1,441.8 608.8,455.1 584.6,461.1" fill="#c6280c" />
<polygon points="598.1,441.8 622.3,435.8 633.0,449.2 608.8,455.1" fill="#c6280c" />
<polygon points="622.3,435.8 646.5,429.9 657.2,443.2 633.0,449.2" fill="#ca660c" />
<polygon points="646.5,429.9 670.7,423.9 681.4,437.2 657.2,443.2" fill="#ca650c" />
<polygon points="670.7,423.9 694.9,417.9 705.6,431.3 681.4,437.2" fill="#ca640c" />
<polygon points="694.9,417.9 719.1,412.0 729.8,425.3 705.6,431.3" fill="#c6280c" />
<polygon points="719.1,412.0 743.3,406.0 754.0,419.3 729.8,425.3" fill="#c9620c" />
<polygon points="743.3,406.0 767.5,400.0 778.2,413.4 754.0,419.3" fill="#c9610c" />
<polygon points="767.5,400.0 791.7,394.1 802.4,407.4 778.2,413.4" fill="#c6280c" />
<polygon points="791.7,394.1 815.9,388.1 826.6,401.4 802.4,407.4" fill="#c95f0c" />
<polygon points="815.9,388.1 840.1,382.1 850.8,395.5 826.6,401.4" fill="#c6280c" />
<polygon points="840.1,382.1 864.3,376.2 875.0,389.5 850.8,395.5" fill="#c6280c" />
<polygon points="864.3,376.2 888.5,370.2 899.2,383.5 875.0,389.5" fill="#c85c0c" />
<polygon points="888.5,370.2 912.7,364.2 923.4,377.6 899.2,383.5" fill="#c85b0c" />
<polygon points="912.7,364.2 936.9,358.3 947.6,371.6 923.4,377.6" fill="#c85a0c" />
<polygon points="936.9,358.3 961.1,352.3 971.8,365.6 947.6,371.6" fill="#c6280c" />
<polygon points="245.8,544.6 270.0,538.7 280.7,552.0 256.5,558.0" fill="#ce760c" />
<polygon points="270.0,538.7 294.2,532.7 304.9,546.1 280.7,552.0" fill="#cd750c" />
<polygon points="294.2,532.7 318.4,526.8 329.1,540.1 304.9,546.1" fill="#cd740c" />
<polygon points="318.4,526.8 342.6,520.8 353.3,534.1 329.1,540.1" fill="#cd730c" />
<polygon points="342.6,520.8 366.8,514.8 377.5,528.2 353.3,534.1" fill="#cd720c" />
<polygon points="366.8,514.8 391.0,508.8 401.7,522.2 377.5,528.2" fill="#c6280c" />
<polygon points="391.0,508.8 415.2,502.9 425.9,516.2 401.7,522.2" fill="#cc700c" />
<polygon points="415.2,502.9 439.4,496.9 450.1,510.3 425.9,516.2" fill="#c4a810" />
<polygon points="439.4,496.9 463.6,490.9 474.3,504.3 450.1,510.3" fill="#78aa0c" />
<polygon points="463.6,490.9 487.8,485.0 498.5,498.3 474.3,504.3" fill="#c4a810" />
<polygon points="487.8,485.0 512.0,479.0 522.7,492.4 498.5,498.3" fill="#78aa0c" />
<polygon points="512.0,479.0 536.2,473.0 546.9,486.4 522.7,492.4" fill="#78aa0c" />
<polygon points="536.2,473.0 560.4,467.1 571.1,480.4 546.9,486.4" fill="#c4a810" />
<polygon points="560.4,467.1 584.6,461.1 595.3,474.5 571.1,480.4" fill="#c4a810" />
<polygon points="584.6,461.1 608.8,455.1 619.5,468.5 595.3,474.5" fill="#78aa0c" />
<polygon points="608.8,455.1 633.0,449.2 643.7,462.5 619.5,468.5" fill="#78aa0c" />
<polygon points="633.0,449.2 657.2,443.2 667.9,456.6 643.7,462.5" fill="#c6280c" />
<polygon points="657.2,443.2 681.4,437.2 692.1,450.6 667.9,456.6" fill="#ca650c" />
<polygon points="681.4,437.2 705.6,431.3 716.3,444.6 692.1,450.6" fill="#ca640c" />
<polygon points="705.6,431.3 729.8,425.3 740.5,438.7 716.3,444.6" fill="#c6280c" />
<polygon points="729.8,425.3 754.0,419.3 764.7,432.7 740.5,438.7" fill="#c9620c" />
<polygon points="754.0,419.3 778.2,413.4 788.9,426.7 764.7,432.7" fill="#c9610c" />
<polygon points="778.2,413.4 802.4,407.4 813.1,420.8 788.9,426.7" fill="#c9600c" />
<polygon points="802.4,407.4 826.6,401.4 837.3,414.8 813.1,420.8" fill="#c95f0c" />
<polygon points="826.6,401.4 850.8,395.5 861.5,408.8 837.3,414.8" fill="#c95e0c" />
<polygon points="850.8,395.5 875.0,389.5 885.7,402.9 861.5,408.8" fill="#c6280c" />
<polygon points="875.0,389.5 899.2,383.5 909.9,396.9 885.7,402.9" fill="#c85c0c" />
<polygon points="899.2,383.5 923.4,377.6 934.1,390.9 909.9,396.9" fill="#c85b0c" />
<polygon points="923.4,377.6 947.6,371.6 958.3,385.0 934.1,390.9" fill="#c85a0c" />
<polygon points="947.6,371.6 971.8,365.6 982.5,379.0 958.3,385.0" fill="#c6280c" />
<path d="M167.4,420.1 L173.7,418.5 L184.4,431.9 L178.1,433.4 Z M191.6,414.1 L197.9,412.6 L208.6,425.9 L202.3,427.5 Z M215.8,408.2 L222.1,406.6 L232.8,420.0 L226.5,421.5 Z M240.0,402.2 L246.3,400.6 L257.0,414.0 L250.7,415.5 Z M264.2,396.2 L270.5,394.7 L281.2,408.0 L274.9,409.6 Z M288.4,390.3 L294.7,388.7 L305.4,402.1 L299.1,403.6 Z M312.6,384.3 L318.9,382.7 L329.6,396.1 L323.3,397.6 Z M336.8,378.3 L343.1,376.8 L353.8,390.1 L347.5,391.7 Z M361.0,372.4 L367.3,370.8 L378.0,384.2 L371.7,385.7 Z M385.2,366.4 L391.5,364.8 L402.2,378.2 L395.9,379.7 Z M409.4,360.4 L415.7,358.9 L426.4,372.2 L420.1,373.8 Z M433.6,354.5 L439.9,352.9 L450.6,366.2 L444.3,367.8 Z M457.8,348.5 L464.1,346.9 L474.8,360.3 L468.5,361.8 Z M482.0,342.5 L488.3,341.0 L499.0,354.3 L492.7,355.9 Z M506.2,336.6 L512.5,335.0 L523.2,348.4 L516.9,349.9 Z M530.4,330.6 L536.7,329.0 L547.4,342.4 L541.1,343.9 Z M554.6,324.6 L560.9,323.1 L571.6,336.4 L565.3,338.0 Z M578.8,318.7 L585.1,317.1 L595.8,330.5 L589.5,332.0 Z M603.0,312.7 L609.3,311.1 L620.0,324.5 L613.7,326.0 Z M627.2,306.7 L633.5,305.2 L644.2,318.5 L637.9,320.1 Z M651.4,300.8 L657.7,299.2 L668.4,312.6 L662.1,314.1 Z M675.6,294.8 L681.9,293.2 L692.6,306.6 L686.3,308.1 Z M699.8,288.8 L706.1,287.3 L716.8,300.6 L710.5,302.2 Z M724.0,282.9 L730.3,281.3 L741.0,294.7 L734.7,296.2 Z M748.2,276.9 L754.5,275.3 L765.2,288.7 L758.9,290.2 Z M772.4,270.9 L778.7,269.4 L789.4,282.7 L783.1,284.3 Z M796.6,265.0 L802.9,263.4 L813.6,276.8 L807.3,278.3 Z M820.8,259.0 L827.1,257.4 L837.8,270.8 L831.5,272.3 Z M845.0,253.0 L851.3,251.5 L862.0,264.8 L855.7,266.4 Z M869.2,247.1 L875.5,245.5 L886.2,258.9 L879.9,260.4 Z M178.1,433.4 L184.4,431.9 L195.1,445.2 L188.8,446.8 Z M202.3,427.5 L208.6,425.9 L219.3,439.3 L213.0,440.8 Z M226.5,421.5 L232.8,420.0 L243.5,433.3 L237.2,434.9 Z M250.7,415.5 L257.0,414.0 L267.7,427.3 L261.4,428.9 Z M274.9,409.6 L281.2,408.0 L291.9,421.4 L285.6,422.9 Z M299.1,403.6 L305.4,402.1 L316.1,415.4 L309.8,417.0 Z M323.3,397.6 L329.6,396.1 L340.3,409.4 L334.0,411.0 Z M347.5,391.7 L353.8,390.1 L364.5,403.5 L358.2,405.0 Z M371.7,385.7 L378.0,384.2 L388.7,397.5 L382.4,399.1 Z M395.9,379.7 L402.2,378.2 L412.9,391.5 L406.6,393.1 Z M420.1,373.8 L426.4,372.2 L437.1,385.6 L430.8,387.1 Z M444.3,367.8 L450.6,366.2 L461.3,379.6 L455.0,381.2 Z M468.5,361.8 L474.8,360.3 L485.5,373.6 L479.2,375.2 Z M492.7,355.9 L499.0,354.3 L509.7,367.7 L503.4,369.2 Z M516.9,349.9 L523.2,348.4 L533.9,361.7 L527.6,363.3 Z M541.1,343.9 L547.4,342.4 L558.1,355.7 L551.8,357.3 Z M565.3,338.0 L571.6,336.4 L582.3,349.8 L576.0,351.3 Z M589.5,332.0 L595.8,330.5 L606.5,343.8 L600.2,345.4 Z M613.7,326.0 L620.0,324.5 L630.7,337.8 L624.4,339.4 Z M637.9,320.1 L644.2,318.5 L654.9,331.9 L648.6,333.4 Z M662.1,314.1 L668.4,312.6 L679.1,325.9 L672.8,327.5 Z M686.3,308.1 L692.6,306.6 L703.3,319.9 L697.0,321.5 Z M710.5,302.2 L716.8,300.6 L727.5,314.0 L721.2,315.5 Z M734.7,296.2 L741.0,294.7 L751.7,308.0 L745.4,309.6 Z M758.9,290.2 L765.2,288.7 L775.9,302.0 L769.6,303.6 Z M783.1,284.3 L789.4,282.7 L800.1,296.1 L793.8,297.6 Z M807.3,278.3 L813.6,276.8 L824.3,290.1 L818.0,291.7 Z M831.5,272.3 L837.8,270.8 L848.5,284.1 L842.2,285.7 Z M855.7,266.4 L862.0,264.8 L872.7,278.2 L866.4,279.7 Z M879.9,260.4 L886.2,258.9 L896.9,272.2 L890.6,273.8 Z M188.8,446.8 L195.1,445.2 L205.8,458.6 L199.5,460.1 Z M213.0,440.8 L219.3,439.3 L230.0,452.6 L223.7,454.2 Z M237.2,434.9 L243.5,433.3 L254.2,446.7 L247.9,448.2 Z M261.4,428.9 L267.7,427.3 L278.4,440.7 L272.1,442.2 Z M285.6,422.9 L291.9,421.4 L302.6,434.7 L296.3,436.3 Z M309.8,417.0 L316.1,415.4 L326.8,428.8 L320.5,430.3 Z M334.0,411.0 L340.3,409.4 L351.0,422.8 L344.7,424.3 Z M358.2,405.0 L364.5,403.5 L375.2,416.8 L368.9,418.4 Z M382.4,399.1 L388.7,397.5 L399.4,410.9 L393.1,412.4 Z M406.6,393.1 L412.9,391.5 L423.6,404.9 L417.3,406.4 Z M430.8,387.1 L437.1,385.6 L447.8,398.9 L441.5,400.5 Z M455.0,381.2 L461.3,379.6 L472.0,392.9 L465.7,394.5 Z M479.2,375.2 L485.5,373.6 L496.2,387.0 L489.9,388.5 Z M503.4,369.2 L509.7,367.7 L520.4,381.0 L514.1,382.6 Z M527.6,363.3 L533.9,361.7 L544.6,375.1 L538.3,376.6 Z M551.8,357.3 L558.1,355.7 L568.8,369.1 L562.5,370.6 Z M576.0,351.3 L582.3,349.8 L593.0,363.1 L586.7,364.7 Z M600.2,345.4 L606.5,343.8 L617.2,357.2 L610.9,358.7 Z M624.4,339.4 L630.7,337.8 L641.4,351.2 L635.1,352.7 Z M648.6,333.4 L654.9,331.9 L665.6,345.2 L659.3,346.8 Z M672.8,327.5 L679.1,325.9 L689.8,339.2 L683.5,340.8 Z M697.0,321.5 L703.3,319.9 L714.0,333.3 L707.7,334.8 Z M721.2,315.5 L727.5,314.0 L738.2,327.3 L731.9,328.9 Z M745.4,309.6 L751.7,308.0 L762.4,321.4 L756.1,322.9 Z M769.6,303.6 L775.9,302.0 L786.6,315.4 L780.3,316.9 Z M793.8,297.6 L800.1,296.1 L810.8,309.4 L804.5,311.0 Z M818.0,291.7 L824.3,290.1 L835.0,303.4 L828.7,305.0 Z M842.2,285.7 L848.5,284.1 L859.2,297.5 L852.9,299.0 Z M866.4,279.7 L872.7,278.2 L883.4,291.5 L877.1,293.1 Z M890.6,273.8 L896.9,272.2 L907.6,285.6 L901.3,287.1 Z M199.5,460.1 L205.8,458.6 L216.5,471.9 L210.2,473.5 Z M223.7,454.2 L230.0,452.6 L240.7,466.0 L234.4,467.5 Z M247.9,448.2 L254.2,446.7 L264.9,460.0 L258.6,461.6 Z M272.1,442.2 L278.4,440.7 L289.1,454.0 L282.8,455.6 Z M296.3,436.3 L302.6,434.7 L313.3,448.1 L307.0,449.6 Z M320.5,430.3 L326.8,428.8 L337.5,442.1 L331.2,443.7 Z M344.7,424.3 L351.0,422.8 L361.7,436.1 L355.4,437.7 Z M368.9,418.4 L375.2,416.8 L385.9,430.2 L379.6,431.7 Z M393.1,412.4 L399.4,410.9 L410.1,424.2 L403.8,425.8 Z M417.3,406.4 L423.6,404.9 L434.3,418.2 L428.0,419.8 Z M441.5,400.5 L447.8,398.9 L458.5,412.3 L452.2,413.8 Z M465.7,394.5 L472.0,392.9 L482.7,406.3 L476.4,407.9 Z M489.9,388.5 L496.2,387.0 L506.9,400.3 L500.6,401.9 Z M514.1,382.6 L520.4,381.0 L531.1,394.4 L524.8,395.9 Z M538.3,376.6 L544.6,375.1 L555.3,388.4 L549.0,390.0 Z M562.5,370.6 L568.8,369.1 L579.5,382.4 L573.2,384.0 Z M586.7,364.7 L593.0,363.1 L603.7,376.5 L597.4,378.0 Z M610.9,358.7 L617.2,357.2 L627.9,370.5 L621.6,372.1 Z M635.1,352.7 L641.4,351.2 L652.1,364.5 L645.8,366.1 Z M659.3,346.8 L665.6,345.2 L676.3,358.6 L670.0,360.1 Z M683.5,340.8 L689.8,339.2 L700.5,352.6 L694.2,354.2 Z M707.7,334.8 L714.0,333.3 L724.7,346.6 L718.4,348.2 Z M731.9,328.9 L738.2,327.3 L748.9,340.7 L742.6,342.2 Z M756.1,322.9 L762.4,321.4 L773.1,334.7 L766.8,336.3 Z M780.3,316.9 L786.6,315.4 L797.3,328.7 L791.0,330.3 Z M804.5,311.0 L810.8,309.4 L821.5,322.8 L815.2,324.3 Z M828.7,305.0 L835.0,303.4 L845.7,316.8 L839.4,318.4 Z M852.9,299.0 L859.2,297.5 L869.9,310.8 L863.6,312.4 Z M877.1,293.1 L883.4,291.5 L894.1,304.9 L887.8,306.4 Z M901.3,287.1 L907.6,285.6 L918.3,298.9 L912.0,300.5 Z M210.2,473.5 L216.5,471.9 L227.2,485.3 L220.9,486.8 Z M234.4,467.5 L240.7,466.0 L251.4,479.3 L245.1,480.9 Z M258.6,461.6 L264.9,460.0 L275.6,473.4 L269.3,474.9 Z M282.8,455.6 L289.1,454.0 L299.8,467.4 L293.5,468.9 Z M307.0,449.6 L313.3,448.1 L324.0,461.4 L317.7,463.0 Z M331.2,443.7 L337.5,442.1 L348.2,455.4 L341.9,457.0 Z M355.4,437.7 L361.7,436.1 L372.4,449.5 L366.1,451.0 Z M379.6,431.7 L385.9,430.2 L396.6,443.5 L390.3,445.1 Z M403.8,425.8 L410.1,424.2 L420.8,437.6 L414.5,439.1 Z M428.0,419.8 L434.3,418.2 L445.0,431.6 L438.7,433.1 Z M452.2,413.8 L458.5,412.3 L469.2,425.6 L462.9,427.2 Z M476.4,407.9 L482.7,406.3 L493.4,419.6 L487.1,421.2 Z M500.6,401.9 L506.9,400.3 L517.6,413.7 L511.3,415.2 Z M524.8,395.9 L531.1,394.4 L541.8,407.7 L535.5,409.3 Z M549.0,390.0 L555.3,388.4 L566.0,401.8 L559.7,403.3 Z M573.2,384.0 L579.5,382.4 L590.2,395.8 L583.9,397.3 Z M597.4,378.0 L603.7,376.5 L614.4,389.8 L608.1,391.4 Z M621.6,372.1 L627.9,370.5 L638.6,383.9 L632.3,385.4 Z M645.8,366.1 L652.1,364.5 L662.8,377.9 L656.5,379.4 Z M670.0,360.1 L676.3,358.6 L687.0,371.9 L680.7,373.5 Z M694.2,354.2 L700.5,352.6 L711.2,365.9 L704.9,367.5 Z M718.4,348.2 L724.7,346.6 L735.4,360.0 L729.1,361.5 Z M742.6,342.2 L748.9,340.7 L759.6,354.0 L753.3,355.6 Z M766.8,336.3 L773.1,334.7 L783.8,348.1 L777.5,349.6 Z M791.0,330.3 L797.3,328.7 L808.0,342.1 L801.7,343.6 Z M815.2,324.3 L821.5,322.8 L832.2,336.1 L825.9,337.7 Z M839.4,318.4 L845.7,316.8 L856.4,330.1 L850.1,331.7 Z M863.6,312.4 L869.9,310.8 L880.6,324.2 L874.3,325.7 Z M887.8,306.4 L894.1,304.9 L904.8,318.2 L898.5,319.8 Z M912.0,300.5 L918.3,298.9 L929.0,312.2 L922.7,313.8 Z M220.9,486.8 L227.2,485.3 L237.9,498.6 L231.6,500.2 Z M245.1,480.9 L251.4,479.3 L262.1,492.7 L255.8,494.2 Z M269.3,474.9 L275.6,473.4 L286.3,486.7 L280.0,488.3 Z M293.5,468.9 L299.8,467.4 L310.5,480.7 L304.2,482.3 Z M317.7,463.0 L324.0,461.4 L334.7,474.8 L328.4,476.3 Z M341.9,457.0 L348.2,455.4 L358.9,468.8 L352.6,470.4 Z M366.1,451.0 L372.4,449.5 L383.1,462.8 L376.8,464.4 Z M390.3,445.1 L396.6,443.5 L407.3,456.9 L401.0,458.4 Z M414.5,439.1 L420.8,437.6 L431.5,450.9 L425.2,452.5 Z M438.7,433.1 L445.0,431.6 L455.7,444.9 L449.4,446.5 Z M462.9,427.2 L469.2,425.6 L479.9,439.0 L473.6,440.5 Z M487.1,421.2 L493.4,419.6 L504.1,433.0 L497.8,434.6 Z M511.3,415.2 L517.6,413.7 L528.3,427.0 L522.0,428.6 Z M535.5,409.3 L541.8,407.7 L552.5,421.1 L546.2,422.6 Z M559.7,403.3 L566.0,401.8 L576.7,415.1 L570.4,416.7 Z M583.9,397.3 L590.2,395.8 L600.9,409.1 L594.6,410.7 Z M608.1,391.4 L614.4,389.8 L625.1,403.2 L618.8,404.7 Z M632.3,385.4 L638.6,383.9 L649.3,397.2 L643.0,398.8 Z M656.5,379.4 L662.8,377.9 L673.5,391.2 L667.2,392.8 Z M680.7,373.5 L687.0,371.9 L697.7,385.3 L691.4,386.8 Z M704.9,367.5 L711.2,365.9 L721.9,379.3 L715.6,380.9 Z M729.1,361.5 L735.4,360.0 L746.1,373.3 L739.8,374.9 Z M753.3,355.6 L759.6,354.0 L770.3,367.4 L764.0,368.9 Z M777.5,349.6 L783.8,348.1 L794.5,361.4 L788.2,363.0 Z M801.7,343.6 L808.0,342.1 L818.7,355.4 L812.4,357.0 Z M825.9,337.7 L832.2,336.1 L842.9,349.5 L836.6,351.0 Z M850.1,331.7 L856.4,330.1 L867.1,343.5 L860.8,345.1 Z M874.3,325.7 L880.6,324.2 L891.3,337.5 L885.0,339.1 Z M898.5,319.8 L904.8,318.2 L915.5,331.6 L909.2,333.1 Z M922.7,313.8 L929.0,312.2 L939.7,325.6 L933.4,327.2 Z M231.6,500.2 L237.9,498.6 L248.6,512.0 L242.3,513.5 Z M255.8,494.2 L262.1,492.7 L272.8,506.0 L266.5,507.6 Z M280.0,488.3 L286.3,486.7 L297.0,500.1 L290.7,501.6 Z M304.2,482.3 L310.5,480.7 L321.2,494.1 L314.9,495.6 Z M328.4,476.3 L334.7,474.8 L345.4,488.1 L339.1,489.7 Z M352.6,470.4 L358.9,468.8 L369.6,482.1 L363.3,483.7 Z M376.8,464.4 L383.1,462.8 L393.8,476.2 L387.5,477.7 Z M401.0,458.4 L407.3,456.9 L418.0,470.2 L411.7,471.8 Z M425.2,452.5 L431.5,450.9 L442.2,464.2 L435.9,465.8 Z M449.4,446.5 L455.7,444.9 L466.4,458.3 L460.1,459.8 Z M473.6,440.5 L479.9,439.0 L490.6,452.3 L484.3,453.9 Z M497.8,434.6 L504.1,433.0 L514.8,446.3 L508.5,447.9 Z M522.0,428.6 L528.3,427.0 L539.0,440.4 L532.7,441.9 Z M546.2,422.6 L552.5,421.1 L563.2,434.4 L556.9,436.0 Z M570.4,416.7 L576.7,415.1 L587.4,428.4 L581.1,430.0 Z M594.6,410.7 L600.9,409.1 L611.6,422.5 L605.3,424.0 Z M618.8,404.7 L625.1,403.2 L635.8,416.5 L629.5,418.1 Z M643.0,398.8 L649.3,397.2 L660.0,410.6 L653.7,412.1 Z M667.2,392.8 L673.5,391.2 L684.2,404.6 L677.9,406.1 Z M691.4,386.8 L697.7,385.3 L708.4,398.6 L702.1,400.2 Z M715.6,380.9 L721.9,379.3 L732.6,392.6 L726.3,394.2 Z M739.8,374.9 L746.1,373.3 L756.8,386.7 L750.5,388.2 Z M764.0,368.9 L770.3,367.4 L781.0,380.7 L774.7,382.3 Z M788.2,363.0 L794.5,361.4 L805.2,374.8 L798.9,376.3 Z M812.4,357.0 L818.7,355.4 L829.4,368.8 L823.1,370.3 Z M836.6,351.0 L842.9,349.5 L853.6,362.8 L847.3,364.4 Z M860.8,345.1 L867.1,343.5 L877.8,356.8 L871.5,358.4 Z M885.0,339.1 L891.3,337.5 L902.0,350.9 L895.7,352.4 Z M909.2,333.1 L915.5,331.6 L926.2,344.9 L919.9,346.5 Z M933.4,327.2 L939.7,325.6 L950.4,338.9 L944.1,340.5 Z M242.3,513.5 L248.6,512.0 L259.3,525.3 L253.0,526.9 Z M266.5,507.6 L272.8,506.0 L283.5,519.4 L277.2,520.9 Z M290.7,501.6 L297.0,500.1 L307.7,513.4 L301.4,515.0 Z M314.9,495.6 L321.2,494.1 L331.9,507.4 L325.6,509.0 Z M339.1,489.7 L345.4,488.1 L356.1,501.5 L349.8,503.0 Z M363.3,483.7 L369.6,482.1 L380.3,495.5 L374.0,497.1 Z M387.5,477.7 L393.8,476.2 L404.5,489.5 L398.2,491.1 Z M411.7,471.8 L418.0,470.2 L428.7,483.6 L422.4,485.1 Z M435.9,465.8 L442.2,464.2 L452.9,477.6 L446.6,479.2 Z M460.1,459.8 L466.4,458.3 L477.1,471.6 L470.8,473.2 Z M484.3,453.9 L490.6,452.3 L501.3,465.7 L495.0,467.2 Z M508.5,447.9 L514.8,446.3 L525.5,459.7 L519.2,461.3 Z M532.7,441.9 L539.0,440.4 L549.7,453.7 L543.4,455.3 Z M556.9,436.0 L563.2,434.4 L573.9,447.8 L567.6,449.3 Z M581.1,430.0 L587.4,428.4 L598.1,441.8 L591.8,443.4 Z M605.3,424.0 L611.6,422.5 L622.3,435.8 L616.0,437.4 Z M629.5,418.1 L635.8,416.5 L646.5,429.9 L640.2,431.4 Z M653.7,412.1 L660.0,410.6 L670.7,423.9 L664.4,425.5 Z M677.9,406.1 L684.2,404.6 L694.9,417.9 L688.6,419.5 Z M702.1,400.2 L708.4,398.6 L719.1,412.0 L712.8,413.5 Z M726.3,394.2 L732.6,392.6 L743.3,406.0 L737.0,407.6 Z M750.5,388.2 L756.8,386.7 L767.5,400.0 L761.2,401.6 Z M774.7,382.3 L781.0,380.7 L791.7,394.1 L785.4,395.6 Z M798.9,376.3 L805.2,374.8 L815.9,388.1 L809.6,389.7 Z M823.1,370.3 L829.4,368.8 L840.1,382.1 L833.8,383.7 Z M847.3,364.4 L853.6,362.8 L864.3,376.2 L858.0,377.7 Z M871.5,358.4 L877.8,356.8 L888.5,370.2 L882.2,371.8 Z M895.7,352.4 L902.0,350.9 L912.7,364.2 L906.4,365.8 Z M919.9,346.5 L926.2,344.9 L936.9,358.3 L930.6,359.8 Z M944.1,340.5 L950.4,338.9 L961.1,352.3 L954.8,353.9 Z M253.0,526.9 L259.3,525.3 L270.0,538.7 L263.7,540.2 Z M277.2,520.9 L283.5,519.4 L294.2,532.7 L287.9,534.3 Z M301.4,515.0 L307.7,513.4 L318.4,526.8 L312.1,528.3 Z M325.6,509.0 L331.9,507.4 L342.6,520.8 L336.3,522.3 Z M349.8,503.0 L356.1,501.5 L366.8,514.8 L360.5,516.4 Z M374.0,497.1 L380.3,495.5 L391.0,508.8 L384.7,510.4 Z M398.2,491.1 L404.5,489.5 L415.2,502.9 L408.9,504.4 Z M422.4,485.1 L428.7,483.6 L439.4,496.9 L433.1,498.5 Z M446.6,479.2 L452.9,477.6 L463.6,490.9 L457.3,492.5 Z M470.8,473.2 L477.1,471.6 L487.8,485.0 L481.5,486.5 Z M495.0,467.2 L501.3,465.7 L512.0,479.0 L505.7,480.6 Z M519.2,461.3 L525.5,459.7 L536.2,473.0 L529.9,474.6 Z M543.4,455.3 L549.7,453.7 L560.4,467.1 L554.1,468.6 Z M567.6,449.3 L573.9,447.8 L584.6,461.1 L578.3,462.7 Z M591.8,443.4 L598.1,441.8 L608.8,455.1 L602.5,456.7 Z M616.0,437.4 L622.3,435.8 L633.0,449.2 L626.7,450.7 Z M640.2,431.4 L646.5,429.9 L657.2,443.2 L650.9,444.8 Z M664.4,425.5 L670.7,423.9 L681.4,437.2 L675.1,438.8 Z M688.6,419.5 L694.9,417.9 L705.6,431.3 L699.3,432.8 Z M712.8,413.5 L719.1,412.0 L729.8,425.3 L723.5,426.9 Z M737.0,407.6 L743.3,406.0 L754.0,419.3 L747.7,420.9 Z M761.2,401.6 L767.5,400.0 L778.2,413.4 L771.9,414.9 Z M785.4,395.6 L791.7,394.1 L802.4,407.4 L796.1,409.0 Z M809.6,389.7 L815.9,388.1 L826.6,401.4 L820.3,403.0 Z M833.8,383.7 L840.1,382.1 L850.8,395.5 L844.5,397.0 Z M858.0,377.7 L864.3,376.2 L875.0,389.5 L868.7,391.1 Z M882.2,371.8 L888.5,370.2 L899.2,383.5 L892.9,385.1 Z M906.4,365.8 L912.7,364.2 L923.4,377.6 L917.1,379.1 Z M930.6,359.8 L936.9,358.3 L947.6,371.6 L941.3,373.2 Z M954.8,353.9 L961.1,352.3 L971.8,365.6 L965.5,367.2 Z M263.7,540.2 L270.0,538.7 L280.7,552.0 L274.4,553.6 Z M287.9,534.3 L294.2,532.7 L304.9,546.1 L298.6,547.6 Z M312.1,528.3 L318.4,526.8 L329.1,540.1 L322.8,541.7 Z M336.3,522.3 L342.6,520.8 L353.3,534.1 L347.0,535.7 Z M360.5,516.4 L366.8,514.8 L377.5,528.2 L371.2,529.7 Z M384.7,510.4 L391.0,508.8 L401.7,522.2 L395.4,523.8 Z M408.9,504.4 L415.2,502.9 L425.9,516.2 L419.6,517.8 Z M433.1,498.5 L439.4,496.9 L450.1,510.3 L443.8,511.8 Z M457.3,492.5 L463.6,490.9 L474.3,504.3 L468.0,505.9 Z M481.5,486.5 L487.8,485.0 L498.5,498.3 L492.2,499.9 Z M505.7,480.6 L512.0,479.0 L522.7,492.4 L516.4,493.9 Z M529.9,474.6 L536.2,473.0 L546.9,486.4 L540.6,488.0 Z M554.1,468.6 L560.4,467.1 L571.1,480.4 L564.8,482.0 Z M578.3,462.7 L584.6,461.1 L595.3,474.5 L589.0,476.0 Z M602.5,456.7 L608.8,455.1 L619.5,468.5 L613.2,470.1 Z M626.7,450.7 L633.0,449.2 L643.7,462.5 L637.4,464.1 Z M650.9,444.8 L657.2,443.2 L667.9,456.6 L661.6,458.1 Z M675.1,438.8 L681.4,437.2 L692.1,450.6 L685.8,452.2 Z M699.3,432.8 L705.6,431.3 L716.3,444.6 L710.0,446.2 Z M723.5,426.9 L729.8,425.3 L740.5,438.7 L734.2,440.2 Z M747.7,420.9 L754.0,419.3 L764.7,432.7 L758.4,434.3 Z M771.9,414.9 L778.2,413.4 L788.9,426.7 L782.6,428.3 Z M796.1,409.0 L802.4,407.4 L813.1,420.8 L806.8,422.3 Z M820.3,403.0 L826.6,401.4 L837.3,414.8 L831.0,416.4 Z M844.5,397.0 L850.8,395.5 L861.5,408.8 L855.2,410.4 Z M868.7,391.1 L875.0,389.5 L885.7,402.9 L879.4,404.4 Z M892.9,385.1 L899.2,383.5 L909.9,396.9 L903.6,398.5 Z M917.1,379.1 L923.4,377.6 L934.1,390.9 L927.8,392.5 Z M941.3,373.2 L947.6,371.6 L958.3,385.0 L952.0,386.5 Z M965.5,367.2 L971.8,365.6 L982.5,379.0 L976.2,380.6 Z" fill="#ffd040" fill-opacity="0.13"/>
<polygon points="149.5,424.5 160.2,437.9 160.2,458.9 149.5,445.5" fill="#ccaf11" />
<polygon points="160.2,437.9 170.9,451.2 170.9,472.2 160.2,458.9" fill="#d67b0c" />
<polygon points="170.9,451.2 181.6,464.6 181.6,485.6 170.9,472.2" fill="#d67b0c" />
<polygon points="181.6,464.6 192.3,477.9 192.3,498.9 181.6,485.6" fill="#ce2a0c" />
<polygon points="192.3,477.9 203.0,491.2 203.0,512.2 192.3,498.9" fill="#ccaf11" />
<polygon points="203.0,491.2 213.7,504.6 213.7,525.6 203.0,512.2" fill="#d67b0c" />
<polygon points="213.7,504.6 224.4,518.0 224.4,539.0 213.7,525.6" fill="#7db10c" />
<polygon points="224.4,518.0 235.1,531.3 235.1,552.3 224.4,539.0" fill="#d67b0c" />
<polygon points="235.1,531.3 245.8,544.6 245.8,565.6 235.1,552.3" fill="#ccaf11" />
<polygon points="245.8,544.6 256.5,558.0 256.5,579.0 245.8,565.6" fill="#d67b0c" />
<polygon points="256.5,558.0 280.7,552.0 280.7,573.0 256.5,579.0" fill="#e48b09" />
<polygon points="280.7,552.0 304.9,546.1 304.9,567.1 280.7,573.0" fill="#e38a09" />
<polygon points="304.9,546.1 329.1,540.1 329.1,561.1 304.9,567.1" fill="#e38909" />
<polygon points="329.1,540.1 353.3,534.1 353.3,555.1 329.1,561.1" fill="#e38809" />
<polygon points="353.3,534.1 377.5,528.2 377.5,549.2 353.3,555.1" fill="#e38709" />
<polygon points="377.5,528.2 401.7,522.2 401.7,543.2 377.5,549.2" fill="#db3209" />
<polygon points="401.7,522.2 425.9,516.2 425.9,537.2 401.7,543.2" fill="#e28409" />
<polygon points="425.9,516.2 450.1,510.3 450.1,531.3 425.9,537.2" fill="#d9c50c" />
<polygon points="450.1,510.3 474.3,504.3 474.3,525.3 450.1,531.3" fill="#87c709" />
<polygon points="474.3,504.3 498.5,498.3 498.5,519.3 474.3,525.3" fill="#d9c50c" />
<polygon points="498.5,498.3 522.7,492.4 522.7,513.4 498.5,519.3" fill="#87c709" />
<polygon points="522.7,492.4 546.9,486.4 546.9,507.4 522.7,513.4" fill="#87c709" />
<polygon points="546.9,486.4 571.1,480.4 571.1,501.4 546.9,507.4" fill="#d9c50c" />
<polygon points="571.1,480.4 595.3,474.5 595.3,495.5 571.1,501.4" fill="#d9c50c" />
<polygon points="595.3,474.5 619.5,468.5 619.5,489.5 595.3,495.5" fill="#87c709" />
<polygon points="619.5,468.5 643.7,462.5 643.7,483.5 619.5,489.5" fill="#87c709" />
<polygon points="643.7,462.5 667.9,456.6 667.9,477.6 643.7,483.5" fill="#db3209" />
<polygon points="667.9,456.6 692.1,450.6 692.1,471.6 667.9,477.6" fill="#e07809" />
<polygon points="692.1,450.6 716.3,444.6 716.3,465.6 692.1,471.6" fill="#e07609" />
<polygon points="716.3,444.6 740.5,438.7 740.5,459.7 716.3,465.6" fill="#db3209" />
<polygon points="740.5,438.7 764.7,432.7 764.7,453.7 740.5,459.7" fill="#df7409" />
<polygon points="764.7,432.7 788.9,426.7 788.9,447.7 764.7,453.7" fill="#df7309" />
<polygon points="788.9,426.7 813.1,420.8 813.1,441.8 788.9,447.7" fill="#df7209" />
<polygon points="813.1,420.8 837.3,414.8 837.3,435.8 813.1,441.8" fill="#df7109" />
<polygon points="837.3,414.8 861.5,408.8 861.5,429.8 837.3,435.8" fill="#df7009" />
<polygon points="861.5,408.8 885.7,402.9 885.7,423.9 861.5,429.8" fill="#db3209" />
<polygon points="885.7,402.9 909.9,396.9 909.9,417.9 885.7,423.9" fill="#de6d09" />
<polygon points="909.9,396.9 934.1,390.9 934.1,411.9 909.9,417.9" fill="#de6c09" />
<polygon points="934.1,390.9 958.3,385.0 958.3,406.0 934.1,411.9" fill="#de6b09" />
<polygon points="958.3,385.0 982.5,379.0 982.5,400.0 958.3,406.0" fill="#db3209" />
<path d="M149.5,424.5 L875.5,245.5 M160.2,437.9 L886.2,258.9 M170.9,451.2 L896.9,272.2 M181.6,464.6 L907.6,285.6 M192.3,477.9 L918.3,298.9 M203.0,491.2 L929.0,312.2 M213.7,504.6 L939.7,325.6 M224.4,518.0 L950.4,338.9 M235.1,531.3 L961.1,352.3 M245.8,544.6 L971.8,365.6 M256.5,558.0 L982.5,379.0 M149.5,424.5 L256.5,558.0 M173.7,418.5 L280.7,552.0 M197.9,412.6 L304.9,546.1 M222.1,406.6 L329.1,540.1 M246.3,400.6 L353.3,534.1 M270.5,394.7 L377.5,528.2 M294.7,388.7 L401.7,522.2 M318.9,382.7 L425.9,516.2 M343.1,376.8 L450.1,510.3 M367.3,370.8 L474.3,504.3 M391.5,364.8 L498.5,498.3 M415.7,358.9 L522.7,492.4 M439.9,352.9 L546.9,486.4 M464.1,346.9 L571.1,480.4 M488.3,341.0 L595.3,474.5 M512.5,335.0 L619.5,468.5 M536.7,329.0 L643.7,462.5 M560.9,323.1 L667.9,456.6 M585.1,317.1 L692.1,450.6 M609.3,311.1 L716.3,444.6 M633.5,305.2 L740.5,438.7 M657.7,299.2 L764.7,432.7 M681.9,293.2 L788.9,426.7 M706.1,287.3 L813.1,420.8 M730.3,281.3 L837.3,414.8 M754.5,275.3 L861.5,408.8 M778.7,269.4 L885.7,402.9 M802.9,263.4 L909.9,396.9 M827.1,257.4 L934.1,390.9 M851.3,251.5 L958.3,385.0 M875.5,245.5 L982.5,379.0" stroke="#583800" stroke-opacity="0.62" stroke-width="2.4" fill="none"/>
<path d="M149.5,424.5 L149.5,445.5 M160.2,437.9 L160.2,458.9 M170.9,451.2 L170.9,472.2 M181.6,464.6 L181.6,485.6 M192.3,477.9 L192.3,498.9 M203.0,491.2 L203.0,512.2 M213.7,504.6 L213.7,525.6 M224.4,518.0 L224.4,539.0 M235.1,531.3 L235.1,552.3 M245.8,544.6 L245.8,565.6 M256.5,558.0 L256.5,579.0 M280.7,552.0 L280.7,573.0 M304.9,546.1 L304.9,567.1 M329.1,540.1 L329.1,561.1 M353.3,534.1 L353.3,555.1 M377.5,528.2 L377.5,549.2 M401.7,522.2 L401.7,543.2 M425.9,516.2 L425.9,537.2 M450.1,510.3 L450.1,531.3 M474.3,504.3 L474.3,525.3 M498.5,498.3 L498.5,519.3 M522.7,492.4 L522.7,513.4 M546.9,486.4 L546.9,507.4 M571.1,480.4 L571.1,501.4 M595.3,474.5 L595.3,495.5 M619.5,468.5 L619.5,489.5 M643.7,462.5 L643.7,483.5 M667.9,456.6 L667.9,477.6 M692.1,450.6 L692.1,471.6 M716.3,444.6 L716.3,465.6 M740.5,438.7 L740.5,459.7 M764.7,432.7 L764.7,453.7 M788.9,426.7 L788.9,447.7 M813.1,420.8 L813.1,441.8 M837.3,414.8 L837.3,435.8 M861.5,408.8 L861.5,429.8 M885.7,402.9 L885.7,423.9 M909.9,396.9 L909.9,417.9 M934.1,390.9 L934.1,411.9 M958.3,385.0 L958.3,406.0 M982.5,379.0 L982.5,400.0 M149.5,445.5 L256.5,579.0 L982.5,400.0" stroke="#8a6408" stroke-opacity="0.7" stroke-width="2" fill="none"/>
</g>
<g stroke-width="1.5" fill="none"><path d="M1121.8,154.2V140" stroke="#20ccd6"/><path d="M1121.8,138.6l-1.9,3.6h3.8z" fill="#20ccd6" stroke="none"/><path d="M1121.8,154.2L1113.4,144.6" stroke="#00dc10" stroke-width="1.2"/><path d="M1121.6,154.3L1140.8,149.4" stroke="#f00808"/></g>
<text x="1119.9" y="136.7" font-size="12" fill="#20ccd6" stroke="#20ccd6" stroke-width="0.3" font-family="Liberation Sans, sans-serif">Z</text>
<text x="1109.4" y="144.9" font-size="12" fill="#00dc10" stroke="#00dc10" stroke-width="0.3" font-family="Liberation Sans, sans-serif">N</text>
<text x="1142" y="152" font-size="12" fill="#f00808" stroke="#f00808" stroke-width="0.3" font-family="Liberation Sans, sans-serif">E</text>
</svg>
<span class="t" style="top:696.6px;line-height:14px;font-size:10px;color:#1e1e1e;left:8.6px;transform-origin:0 50%;transform:scaleX(1.005);">Colour by</span>
<div class="a" style="left:56.3px;top:688.5px;width:105.5px;height:26.5px;background:#ffffff;border:1px solid #d3d6e4;box-sizing:border-box;"></div>
<span class="t" style="top:696.6px;line-height:14px;font-size:10px;color:#1e1e1e;left:59.6px;transform-origin:0 50%;transform:scaleX(1.042);">Activity</span>
<svg class="a" style="left:152.8px;top:700.7px;" width="5" height="3" viewBox="0 0 5 3"><path d="M0,0 L5,0 L2.5,3 Z" fill="#1a1a1a"/></svg>
<svg class="a" style="left:169.5px;top:696.5px;" width="14" height="12" viewBox="0 0 14 12"><path d="M3,1H6.2L4.2,11H1Z" fill="#f0a050"/><path d="M6.2,1H9.4L7.4,11H4.2Z" fill="#7cc04a"/><path d="M9.4,1H12.6L10.6,11H7.4Z" fill="#d05aa0"/></svg>
<svg class="a" style="left:196px;top:696.5px;" width="12" height="12" viewBox="0 0 12 12"><path d="M10.4,0.8L11.4,1.8L4.2,9.6L2.6,8.4Z" fill="#c9202a"/><path d="M2.6,8.4L4.2,9.6L1,11.4Z" fill="#c9202a"/><path d="M8.6,6.2L10.6,8.2L9.6,9.2" fill="none" stroke="#8fc0dc" stroke-width="0.9"/></svg>
<svg class="a" style="left:216.5px;top:696px;" width="13.5" height="13.5" viewBox="0 0 13.5 13.5"><path d="M6.75,0.3L8.3,2.3L10.9,1.9L11.1,4.5L13.3,5.9L11.9,8L12.7,10.5L10.1,11L8.9,13.3L6.75,11.9L4.6,13.3L3.4,11L0.8,10.5L1.6,8L0.2,5.9L2.4,4.5L2.6,1.9L5.2,2.3Z" fill="#1c76a8"/><circle cx="6.75" cy="6.8" r="2.7" fill="#f0f0f0"/></svg>
<div class="a" style="left:236.4px;top:692px;width:1px;height:20px;background:#dadada;"></div>
<div class="a" style="left:344px;top:692px;width:1px;height:20px;background:#dadada;"></div>
<svg class="a" style="left:241.5px;top:695px;" width="15" height="14" viewBox="0 0 15 14"><rect x="1" y="3" width="10.4" height="10" fill="#fff" stroke="#1c76a8" stroke-width="1.2"/><path d="M3,9L6.4,4.4M5.2,11L11.6,2.6M8.8,11L13.8,4.4" stroke="#1c76a8" stroke-width="1.3" fill="none"/><path d="M9.4,0.8H14.2V5.6" fill="none" stroke="#1c76a8" stroke-width="1.1"/></svg>
<span class="t" style="top:696.6px;line-height:14px;font-size:10px;color:#1e1e1e;left:259.6px;transform-origin:0 50%;transform:scaleX(1.043);">Mining Direction</span>
<svg class="a" style="left:349px;top:695.5px;" width="14" height="14" viewBox="0 0 14 14"><path d="M6,8.4L10.6,1L12.6,8.6Z" fill="#dcecf5" stroke="#1c76a8" stroke-width="1.1" stroke-linejoin="round"/><path d="M1,7.4L9.4,12.2M1.4,12.4L8.6,7.6" stroke="#d4303a" stroke-width="1.3"/></svg>
<span class="t" style="top:696.6px;line-height:14px;font-size:10px;color:#1e1e1e;left:366.9px;transform-origin:0 50%;transform:scaleX(0.983);">Cut Solids</span>
<svg class="a" style="left:422.5px;top:698px;" width="11" height="8" viewBox="0 0 11 8"><path d="M0.6,0.8H10.2L8.2,7H2.6Z" fill="#e3ecf2" stroke="#c9dbe6" stroke-width="0.8"/></svg>
<span class="t" style="top:696.6px;line-height:14px;font-size:10px;color:#b9b9b9;left:439.6px;transform-origin:0 50%;transform:scaleX(0.972);">Export Cuts</span>
<svg class="a" style="left:500.5px;top:694px;" width="15" height="15" viewBox="0 0 15 15"><rect x="0.4" y="0.6" width="13" height="5.4" fill="#1c76a8"/><path d="M2,2V4.6M4.2,2.2H5.8V4.4H4.2ZM7.6,2.2L8.6,4.4L9.6,2.2M11,2V4.6" stroke="#fff" stroke-width="0.7" fill="none"/><path d="M6.6,7.4L11.4,12.2M11.8,8.4V12.6H7.6" fill="none" stroke="#1c76a8" stroke-width="1.6"/></svg>
<span class="t" style="top:696.6px;line-height:14px;font-size:10px;color:#1e1e1e;left:519px;transform-origin:0 50%;transform:scaleX(1.010);">Import Cuts</span>
<svg class="a" style="left:1146px;top:706.5px;" width="7" height="6" viewBox="0 0 7 6"><path d="M0.5,0.8H6.5" stroke="#c0c0c0" stroke-width="1"/><path d="M1,2.6H6L3.5,5.4Z" fill="#c0c0c0"/></svg>
<div class="a" style="left:4px;top:718px;width:1152px;height:1px;background:#7db5e0;"></div>
<svg class="a" style="left:5.2px;top:728.4px;" width="13" height="13" viewBox="0 0 13 13"><rect width="13" height="13" fill="#7fb2d0"/><path d="M3.4,3.3H9.8M3.4,6.5H9.8M3.4,9.7H9.8" stroke="#fff" stroke-width="1.5"/></svg>
<span class="t" style="top:729px;line-height:14px;font-size:10px;color:#1e1e1e;left:21.5px;transform-origin:0 50%;transform:scaleX(1.076);">Output</span>
<svg class="a" style="left:1119.1px;top:730.2px;" width="7" height="3.6" viewBox="0 0 7 3.6"><path d="M0,0 L7,0 L3.5,3.6 Z" fill="#2a2a2a"/></svg>
<svg class="a" style="left:1133px;top:726.6px;" width="7.5" height="9.5" viewBox="0 0 7.5 9.5"><path d="M2,0.7H5.6M2.4,0.7V4.8M5.2,0.7V4.8M0.8,5H6.8M3.8,5V9" stroke="#3a3a3a" stroke-width="1" fill="none"/><rect x="3.9" y="0.8" width="1.3" height="4" fill="#3a3a3a"/></svg>
<svg class="a" style="left:1146.8px;top:727.6px;" width="7.4" height="7.4" viewBox="0 0 7.4 7.4"><path d="M0.7,0.7L6.7,6.7M6.7,0.7L0.7,6.7" stroke="#a8a8a8" stroke-width="1.1"/></svg>
<div class="a" style="left:0;top:743px;width:120px;height:7px;overflow:hidden"><span class="t" style="left:6px;top:4px;font-size:10px;line-height:12px;color:#555;letter-spacing:0.2px">Validating Constraints...</span></div>
<div class="a" style="left:4.3px;top:754.2px;width:61.9px;height:19.3px;background:#eeeeee;"></div>
<div class="a" style="left:65.2px;top:754.2px;width:1px;height:19.3px;background:#b8b8b8;"></div>
<svg class="a" style="left:7.4px;top:758px;" width="13" height="13" viewBox="0 0 13 13"><rect width="13" height="13" fill="#7fb2d0"/><path d="M3.4,3.3H9.8M3.4,6.5H9.8M3.4,9.7H9.8" stroke="#fff" stroke-width="1.5"/></svg>
<span class="t" style="top:758.6px;line-height:14px;font-size:10px;color:#1e1e1e;left:24.7px;transform-origin:0 50%;transform:scaleX(0.928);">Jobs</span>
<svg class="a" style="left:50.9px;top:761.6px;" width="6.5" height="6.5" viewBox="0 0 6.5 6.5"><path d="M0.8,0.8L5.7,5.7M5.7,0.8L0.8,5.7" stroke="#b0b0b0" stroke-width="1.5"/></svg>
<div class="a" style="left:66.2px;top:753px;width:80px;height:20.5px;background:#ffffff;"></div>
<svg class="a" style="left:74.1px;top:755.5px;" width="13" height="13" viewBox="0 0 13 13"><rect width="13" height="13" fill="#7fb2d0"/><path d="M3.4,3.3H9.8M3.4,6.5H9.8M3.4,9.7H9.8" stroke="#fff" stroke-width="1.5"/></svg>
<span class="t" style="top:756.6px;line-height:14px;font-size:10px;color:#1e1e1e;left:91.4px;transform-origin:0 50%;transform:scaleX(1.059);">Output</span>
<svg class="a" style="left:130.3px;top:759.8px;" width="6.5" height="6.5" viewBox="0 0 6.5 6.5"><path d="M0.8,0.8L5.7,5.7M5.7,0.8L0.8,5.7" stroke="#b0b0b0" stroke-width="1.5"/></svg>
<div class="a" style="left:146.2px;top:754.2px;width:109.3px;height:19.3px;background:#eeeeee;"></div>
<div class="a" style="left:254.5px;top:754.2px;width:1px;height:19.3px;background:#b8b8b8;"></div>
<svg class="a" style="left:152.6px;top:758px;" width="13" height="13" viewBox="0 0 13 13"><rect width="13" height="13" fill="#7fb2d0"/><path d="M3.4,3.3H9.8M3.4,6.5H9.8M3.4,9.7H9.8" stroke="#fff" stroke-width="1.5"/></svg>
<span class="t" style="top:758.6px;line-height:14px;font-size:10px;color:#1e1e1e;left:169.9px;transform-origin:0 50%;">Road Network</span>
<svg class="a" style="left:240.1px;top:761.6px;" width="6.5" height="6.5" viewBox="0 0 6.5 6.5"><path d="M0.8,0.8L5.7,5.7M5.7,0.8L0.8,5.7" stroke="#b0b0b0" stroke-width="1.5"/></svg>
<div class="a" style="left:255.5px;top:754.2px;width:108.1px;height:19.3px;background:#eeeeee;"></div>
<div class="a" style="left:362.6px;top:754.2px;width:1px;height:19.3px;background:#b8b8b8;"></div>
<svg class="a" style="left:261.7px;top:758px;" width="13" height="13" viewBox="0 0 13 13"><rect width="13" height="13" fill="#7fb2d0"/><path d="M3.4,3.3H9.8M3.4,6.5H9.8M3.4,9.7H9.8" stroke="#fff" stroke-width="1.5"/></svg>
<span class="t" style="top:758.6px;line-height:14px;font-size:10px;color:#1e1e1e;left:279px;transform-origin:0 50%;transform:scaleX(0.989);">Dependencies</span>
<svg class="a" style="left:348.8px;top:761.6px;" width="6.5" height="6.5" viewBox="0 0 6.5 6.5"><path d="M0.8,0.8L5.7,5.7M5.7,0.8L0.8,5.7" stroke="#b0b0b0" stroke-width="1.5"/></svg>
<div class="a" style="left:363.6px;top:754.2px;width:71px;height:19.3px;background:#eeeeee;"></div>
<div class="a" style="left:433.6px;top:754.2px;width:1px;height:19.3px;background:#b8b8b8;"></div>
<svg class="a" style="left:371px;top:758px;" width="13" height="13" viewBox="0 0 13 13"><rect width="13" height="13" fill="#7fb2d0"/><path d="M3.4,3.3H9.8M3.4,6.5H9.8M3.4,9.7H9.8" stroke="#fff" stroke-width="1.5"/></svg>
<span class="t" style="top:758.6px;line-height:14px;font-size:10px;color:#1e1e1e;left:388.3px;transform-origin:0 50%;transform:scaleX(1.022);">Gantt</span>
<svg class="a" style="left:419.9px;top:761.6px;" width="6.5" height="6.5" viewBox="0 0 6.5 6.5"><path d="M0.8,0.8L5.7,5.7M5.7,0.8L0.8,5.7" stroke="#b0b0b0" stroke-width="1.5"/></svg>
<div class="a" style="left:434.6px;top:754.2px;width:129px;height:19.3px;background:#eeeeee;"></div>
<div class="a" style="left:562.6px;top:754.2px;width:1px;height:19.3px;background:#b8b8b8;"></div>
<svg class="a" style="left:441.5px;top:758px;" width="13" height="13" viewBox="0 0 13 13"><rect width="13" height="13" fill="#7fb2d0"/><path d="M3.4,3.3H9.8M3.4,6.5H9.8M3.4,9.7H9.8" stroke="#fff" stroke-width="1.5"/></svg>
<span class="t" style="top:758.6px;line-height:14px;font-size:10px;color:#1e1e1e;left:458.8px;transform-origin:0 50%;transform:scaleX(0.978);">Schedule Playback</span>
<svg class="a" style="left:548.6px;top:761.6px;" width="6.5" height="6.5" viewBox="0 0 6.5 6.5"><path d="M0.8,0.8L5.7,5.7M5.7,0.8L0.8,5.7" stroke="#b0b0b0" stroke-width="1.5"/></svg>
<div class="a" style="left:1163px;top:60px;width:232px;height:24.5px;background:#ffffff;"></div>
<svg class="a" style="left:1171px;top:70.2px;" width="9" height="2" viewBox="0 0 9 2"><rect width="9" height="1.2" fill="#f0b4b8"/></svg>
<svg class="a" style="left:1191.5px;top:66.5px;" width="14" height="9.5" viewBox="0 0 14 9.5"><rect x="0.3" y="0.3" width="13.4" height="8.6" fill="#c9d3dc" stroke="#9fb4c4" stroke-width="0.6"/><circle cx="7" cy="4.7" r="2.6" fill="#5a6670"/><circle cx="7" cy="4.7" r="1.1" fill="#c9d3dc"/><rect x="1.4" y="1.2" width="2.2" height="1.3" fill="#eef3f7"/></svg>
<svg class="a" style="left:1213px;top:66.5px;" width="14" height="9" viewBox="0 0 14 9"><path d="M0.7,4.5C3,0.6 11,0.6 13.3,4.5C11,8.4 3,8.4 0.7,4.5Z" fill="#fff" stroke="#1c76a8" stroke-width="1.2"/><circle cx="7" cy="4.5" r="2.3" fill="none" stroke="#1c76a8" stroke-width="1.1"/></svg>
<svg class="a" style="left:1234.5px;top:66.5px;" width="14" height="9" viewBox="0 0 14 9"><path d="M0.7,4.5C3,0.6 11,0.6 13.3,4.5C11,8.4 3,8.4 0.7,4.5Z" fill="#fff" stroke="#1c76a8" stroke-width="1.2"/><circle cx="7" cy="4.5" r="2.3" fill="none" stroke="#1c76a8" stroke-width="1.1"/></svg>
<svg class="a" style="left:1235.5px;top:65.5px;" width="12" height="11" viewBox="0 0 12 11"><path d="M1,10L11,1" stroke="#d4202c" stroke-width="2"/></svg>
<svg class="a" style="left:1386.5px;top:74px;" width="6" height="5" viewBox="0 0 6 5"><path d="M0.4,0.7H5.6" stroke="#c8c8c8" stroke-width="0.9"/><path d="M0.8,2.2H5.2L3,4.6Z" fill="#c8c8c8"/></svg>
<div class="a" style="left:1166px;top:84.5px;width:229px;height:18px;background:#ffffff;border:1px solid #d6d8e6;box-sizing:border-box;"></div>
<span class="t" style="top:88.3px;line-height:14px;font-size:10px;color:#8c8c8c;font-style:italic;left:1171px;transform-origin:0 50%;">Filter by Name</span>
<div class="a" style="left:1166px;top:102.5px;width:229px;height:65.5px;background:#ffffff;"></div>
<div class="a" style="left:1166px;top:102.5px;width:212.5px;height:24.5px;background:#ffffff;border:1px solid #d6d8e6;box-sizing:border-box;"></div>
<div class="a" style="left:1183.5px;top:102.5px;width:1px;height:24.5px;background:#d6d8e6;"></div>
<span class="t" style="top:109.3px;line-height:14px;font-size:10px;color:#1a1a1a;font-weight:bold;left:1188px;transform-origin:0 50%;transform:scaleX(1.050);">Name</span>
<div class="a" style="left:1378.5px;top:102.5px;width:16.5px;height:65.5px;background:#ffffff;"></div>
<svg class="a" style="left:1382.5px;top:109px;" width="7" height="4" viewBox="0 0 7 4"><path d="M0,4 L7,4 L3.5,0 Z" fill="#1a1a1a"/></svg>
<div class="a" style="left:1382px;top:117.5px;width:8px;height:14px;background:#c9cbdc;"></div>
<svg class="a" style="left:1382.5px;top:157.7px;" width="7" height="4" viewBox="0 0 7 4"><path d="M0,0 L7,0 L3.5,4 Z" fill="#1a1a1a"/></svg>
<svg class="a" style="left:1172.6px;top:137.5px;" width="4.6" height="3" viewBox="0 0 4.6 3"><path d="M0,3 L4.6,3 L2.3,0 Z" fill="#1a1a1a"/></svg>
<svg class="a" style="left:1188px;top:134.5px;" width="14" height="9" viewBox="0 0 14 9"><path d="M0.7,4.5C3,0.6 11,0.6 13.3,4.5C11,8.4 3,8.4 0.7,4.5Z" fill="#fff" stroke="#1c76a8" stroke-width="1.2"/><circle cx="7" cy="4.5" r="2.3" fill="none" stroke="#1c76a8" stroke-width="1.1"/></svg>
<svg class="a" style="left:1209.1px;top:132.5px;" width="13" height="13" viewBox="0 0 13 13"><path d="M2.2,1.6L10.6,0.8L12.4,8.6L7,12.4L0.8,8.4Z" fill="#cfe4f0" stroke="#5ea3c8" stroke-width="1"/><path d="M3.6,3.2L9.6,2.6L10.6,8L6.8,10.4L2.8,7.8Z" fill="#3f95c4"/><path d="M5,4.4L8.6,4L9,6.6L6.4,7.2Z" fill="#e4f2f9"/></svg>
<span class="t" style="top:133px;line-height:14px;font-size:10px;color:#1e1e1e;left:1232.4px;transform-origin:0 50%;transform:scaleX(0.993);">Dynamic Block Pit</span>
<div class="a" style="left:1184.5px;top:149.5px;width:193.5px;height:18.5px;background:#d9e9f3;border:1px solid #2a2a2a;border-bottom:none;box-sizing:border-box"></div>
<svg class="a" style="left:1211.7px;top:155.8px;" width="14" height="9" viewBox="0 0 14 9"><path d="M0.7,4.5C3,0.6 11,0.6 13.3,4.5C11,8.4 3,8.4 0.7,4.5Z" fill="#fff" stroke="#1c76a8" stroke-width="1.2"/><circle cx="7" cy="4.5" r="2.3" fill="none" stroke="#1c76a8" stroke-width="1.1"/></svg>
<span class="t" style="top:154.5px;line-height:14px;font-size:10px;color:#1e1e1e;left:1233.7px;transform-origin:0 50%;transform:scaleX(0.958);">Dynamic_Solids_Pit</span>
<div class="a" style="left:1163px;top:168px;width:232px;height:6px;background:#e2e2e2;"></div>
<div class="a" style="left:1163px;top:168px;width:232px;height:1px;background:#cfcfcf;"></div>
<div class="a" style="left:1274px;top:171px;width:1.6px;height:1.4px;background:#333;"></div>
<div class="a" style="left:1277px;top:171px;width:1.6px;height:1.4px;background:#333;"></div>
<div class="a" style="left:1280px;top:171px;width:1.6px;height:1.4px;background:#333;"></div>
<div class="a" style="left:1283px;top:171px;width:1.6px;height:1.4px;background:#333;"></div>
<div class="a" style="left:1381.5px;top:174px;width:13.5px;height:579px;background:#f0f0f0;"></div>
<svg class="a" style="left:1384.8px;top:179.7px;" width="7" height="4" viewBox="0 0 7 4"><path d="M0,4 L7,4 L3.5,0 Z" fill="#1a1a1a"/></svg>
<div class="a" style="left:1384.5px;top:188px;width:7.5px;height:528px;background:#c9cbdc;"></div>
<svg class="a" style="left:1384.8px;top:743px;" width="7" height="4" viewBox="0 0 7 4"><path d="M0,0 L7,0 L3.5,4 Z" fill="#1a1a1a"/></svg>
<span class="t" style="top:178.7px;line-height:14px;font-size:10px;color:#5a5a5a;left:1166.6px;transform-origin:0 50%;transform:scaleX(0.961);">Visual</span>
<svg class="a" style="left:1193px;top:198.5px;" width="13" height="13" viewBox="0 0 13 13"><path d="M2.2,1.6L10.6,0.8L12.4,8.6L7,12.4L0.8,8.4Z" fill="#cfe4f0" stroke="#5ea3c8" stroke-width="1"/><path d="M3.6,3.2L9.6,2.6L10.6,8L6.8,10.4L2.8,7.8Z" fill="#3f95c4"/><path d="M5,4.4L8.6,4L9,6.6L6.4,7.2Z" fill="#e4f2f9"/></svg>
<span class="t" style="top:199px;line-height:14px;font-size:10px;color:#1a1a1a;font-weight:bold;left:1213.6px;transform-origin:0 50%;transform:scaleX(0.962);">Dynamic_Solids_Pit</span>
<span class="t" style="top:221px;line-height:14px;font-size:10px;color:#5a5a5a;left:1166.6px;transform-origin:0 50%;transform:scaleX(1.021);">Attached Components</span>
<div class="a" style="left:1169.4px;top:238.7px;width:17.6px;height:17.6px;border-radius:50%;background:#fff;border:1px solid #d6d8e6;box-sizing:border-box"></div>
<svg class="a" style="left:1175.9px;top:246.1px;" width="4.6" height="3" viewBox="0 0 4.6 3"><path d="M0,3 L4.6,3 L2.3,0 Z" fill="#1a1a1a"/></svg>
<svg class="a" style="left:1192.5px;top:242px;" width="13" height="11" viewBox="0 0 13 11"><path d="M3,0.6H6L4,10.4H1Z" fill="#f0a050"/><path d="M6,0.6H9L7,10.4H4Z" fill="#7cc04a"/><path d="M9,0.6H12L10,10.4H7Z" fill="#d05aa0"/></svg>
<span class="t" style="top:241.5px;line-height:14px;font-size:10px;color:#1e1e1e;left:1212.6px;transform-origin:0 50%;">Dynamic Colour</span>
<div class="a" style="left:1356.7px;top:246px;width:8.6px;height:2px;background:#c0202c;"></div>
<div class="a" style="left:1169.4px;top:263.7px;width:206px;height:18px;background:#ffffff;border:1px solid #d6d8e6;box-sizing:border-box;"></div>
<svg class="a" style="left:1215.5px;top:266px;" width="12.5" height="12.5" viewBox="0 0 12.5 12.5"><path d="M0.8,0.8H9.8L11.7,2.7V11.7H0.8Z" fill="#fff" stroke="#444" stroke-width="1.1"/><rect x="2.8" y="1.2" width="6" height="3.4" fill="#fff" stroke="#444" stroke-width="0.8"/><rect x="2.4" y="7" width="7.6" height="4.4" fill="#2a84b4"/></svg>
<span class="t" style="top:266.8px;line-height:14px;font-size:10px;color:#1e1e1e;left:1235px;transform-origin:0 50%;transform:scaleX(0.991);">Save Dynamic Colour</span>
<div class="a" style="left:1170px;top:297.4px;width:204.7px;height:35.3px;border:1px solid #d2d2d6;border-radius:3px;box-sizing:border-box"></div>
<div class="a" style="left:1177.5px;top:295.4px;width:90px;height:5px;background:#f0f0f0;"></div>
<span class="t" style="top:291.4px;line-height:14px;font-size:10px;color:#5a5a5a;left:1180.2px;transform-origin:0 50%;transform:scaleX(1.004);">Available Columns</span>
<div class="a" style="left:1176px;top:307.4px;width:192.8px;height:19.2px;background:#ffffff;border:1px solid #d6d8e6;box-sizing:border-box;"></div>
<div class="a" style="left:1182.7px;top:312.7px;width:10.3px;height:10.3px;background:#0c96ea;"></div>
<span class="t" style="left:1183.6px;top:311.2px;font-family:'Liberation Serif',serif;font-weight:bold;font-size:11px;line-height:13px;color:#fff">N</span>
<span class="t" style="top:311.6px;line-height:14px;font-size:10px;color:#1e1e1e;left:1199.3px;transform-origin:0 50%;transform:scaleX(0.979);">cu_grade</span>
<svg class="a" style="left:1359.3px;top:316.1px;" width="5" height="3" viewBox="0 0 5 3"><path d="M0,0 L5,0 L2.5,3 Z" fill="#1a1a1a"/></svg>
<div class="a" style="left:1170px;top:349.4px;width:204.7px;height:29.8px;border:1px solid #d2d2d6;border-radius:3px;box-sizing:border-box"></div>
<div class="a" style="left:1177.5px;top:347.4px;width:99.6px;height:5px;background:#f0f0f0;"></div>
<span class="t" style="top:343.4px;line-height:14px;font-size:10px;color:#5a5a5a;left:1180.2px;transform-origin:0 50%;transform:scaleX(1.028);">Comparison Method</span>
<div class="a" style="left:1176.6px;top:361px;width:11.6px;height:11.6px;border-radius:50%;background:#fff;border:1px solid #d6d8e6;box-sizing:border-box"></div>
<div class="a" style="left:1179.6px;top:364px;width:5.6px;height:5.6px;border-radius:50%;background:#111"></div>
<span class="t" style="top:360.8px;line-height:14px;font-size:10px;color:#1e1e1e;left:1194px;transform-origin:0 50%;transform:scaleX(0.976);">Ranged</span>
<div class="a" style="left:1170px;top:396px;width:204.7px;height:101px;border:1px solid #d2d2d6;border-radius:3px;box-sizing:border-box"></div>
<div class="a" style="left:1177.5px;top:394px;width:93px;height:5px;background:#f0f0f0;"></div>
<span class="t" style="top:390px;line-height:14px;font-size:10px;color:#5a5a5a;left:1180.2px;transform-origin:0 50%;transform:scaleX(0.987);">Step Value Settings</span>
<span class="t" style="top:410.4px;line-height:14px;font-size:10px;color:#1e1e1e;left:1176px;transform-origin:0 50%;transform:scaleX(0.976);">Start</span>
<div class="a" style="left:1274.2px;top:406.6px;width:94.6px;height:18.4px;background:#ffffff;border:1px solid #d6d8e6;box-sizing:border-box;"></div>
<span class="t" style="top:410.4px;line-height:14px;font-size:10px;color:#1e1e1e;left:1322.02px;transform-origin:100% 50%;transform:scaleX(0.974);">0.0010</span>
<svg class="a" style="left:1360.3px;top:411.3px;" width="5.4" height="3" viewBox="0 0 5.4 3"><path d="M0,3 L5.4,3 L2.7,0 Z" fill="#1a1a1a"/></svg>
<svg class="a" style="left:1360.3px;top:418.7px;" width="5.4" height="3" viewBox="0 0 5.4 3"><path d="M0,0 L5.4,0 L2.7,3 Z" fill="#1a1a1a"/></svg>
<span class="t" style="top:432.4px;line-height:14px;font-size:10px;color:#1e1e1e;left:1176px;transform-origin:0 50%;transform:scaleX(0.963);">Step</span>
<div class="a" style="left:1274.2px;top:428.6px;width:94.6px;height:18.4px;background:#ffffff;border:1px solid #d6d8e6;box-sizing:border-box;"></div>
<span class="t" style="top:432.4px;line-height:14px;font-size:10px;color:#1e1e1e;left:1322.02px;transform-origin:100% 50%;transform:scaleX(0.974);">0.2499</span>
<svg class="a" style="left:1360.3px;top:433.3px;" width="5.4" height="3" viewBox="0 0 5.4 3"><path d="M0,3 L5.4,3 L2.7,0 Z" fill="#1a1a1a"/></svg>
<svg class="a" style="left:1360.3px;top:440.7px;" width="5.4" height="3" viewBox="0 0 5.4 3"><path d="M0,0 L5.4,0 L2.7,3 Z" fill="#1a1a1a"/></svg>
<span class="t" style="top:454.5px;line-height:14px;font-size:10px;color:#1e1e1e;left:1176px;transform-origin:0 50%;transform:scaleX(1.019);">Count</span>
<div class="a" style="left:1274.2px;top:450.7px;width:94.6px;height:18.4px;background:#ffffff;border:1px solid #d6d8e6;box-sizing:border-box;"></div>
<span class="t" style="top:454.5px;line-height:14px;font-size:10px;color:#1e1e1e;left:1347.04px;transform-origin:100% 50%;transform:scaleX(0.971);">8</span>
<svg class="a" style="left:1360.3px;top:455.4px;" width="5.4" height="3" viewBox="0 0 5.4 3"><path d="M0,3 L5.4,3 L2.7,0 Z" fill="#1a1a1a"/></svg>
<svg class="a" style="left:1360.3px;top:462.8px;" width="5.4" height="3" viewBox="0 0 5.4 3"><path d="M0,0 L5.4,0 L2.7,3 Z" fill="#1a1a1a"/></svg>
<span class="t" style="top:476.6px;line-height:14px;font-size:10px;color:#1e1e1e;left:1176px;transform-origin:0 50%;transform:scaleX(0.922);">End</span>
<div class="a" style="left:1274.2px;top:472.8px;width:94.6px;height:18.4px;background:#ffffff;border:1px solid #d6d8e6;box-sizing:border-box;"></div>
<span class="t" style="top:476.6px;line-height:14px;font-size:10px;color:#1e1e1e;left:1322.02px;transform-origin:100% 50%;transform:scaleX(0.974);">2.0005</span>
<svg class="a" style="left:1360.3px;top:477.5px;" width="5.4" height="3" viewBox="0 0 5.4 3"><path d="M0,3 L5.4,3 L2.7,0 Z" fill="#1a1a1a"/></svg>
<svg class="a" style="left:1360.3px;top:484.9px;" width="5.4" height="3" viewBox="0 0 5.4 3"><path d="M0,0 L5.4,0 L2.7,3 Z" fill="#1a1a1a"/></svg>
<div class="a" style="left:1170px;top:514px;width:204.7px;height:79.4px;border:1px solid #d2d2d6;border-radius:3px;box-sizing:border-box"></div>
<div class="a" style="left:1177.5px;top:512px;width:75px;height:5px;background:#f0f0f0;"></div>
<span class="t" style="top:508px;line-height:14px;font-size:10px;color:#5a5a5a;left:1180.2px;transform-origin:0 50%;transform:scaleX(0.987);">Colour Scheme</span>
<div class="a" style="left:1176px;top:524.4px;width:192.8px;height:18.2px;background:#ffffff;border:1px solid #d6d8e6;box-sizing:border-box;"></div>
<div class="a" style="left:1179.4px;top:527.2px;width:172.6px;height:13px;background:linear-gradient(90deg,#f06468 0%,#f0a068 14%,#f0e068 31%,#98f060 45%,#68f0a0 58%,#68e0f0 68%,#68a0f0 78%,#8068f0 87%,#d868f0 96%,#ec68e4 100%)"></div>
<svg class="a" style="left:1359.3px;top:532px;" width="5" height="3" viewBox="0 0 5 3"><path d="M0,0 L5,0 L2.5,3 Z" fill="#1a1a1a"/></svg>
<span class="t" style="top:550.5px;line-height:14px;font-size:10px;color:#1e1e1e;left:1176px;transform-origin:0 50%;">Opacity</span>
<div class="a" style="left:1274.2px;top:546.4px;width:94.6px;height:18.4px;background:#ffffff;border:1px solid #d6d8e6;box-sizing:border-box;"></div>
<span class="t" style="top:550.2px;line-height:14px;font-size:10px;color:#1e1e1e;left:1318.69px;transform-origin:100% 50%;transform:scaleX(0.985);">60.00%</span>
<svg class="a" style="left:1360.3px;top:551.1px;" width="5.4" height="3" viewBox="0 0 5.4 3"><path d="M0,3 L5.4,3 L2.7,0 Z" fill="#1a1a1a"/></svg>
<svg class="a" style="left:1360.3px;top:558.5px;" width="5.4" height="3" viewBox="0 0 5.4 3"><path d="M0,0 L5.4,0 L2.7,3 Z" fill="#1a1a1a"/></svg>
<span class="t" style="top:572.5px;line-height:14px;font-size:10px;color:#1e1e1e;left:1176px;transform-origin:0 50%;transform:scaleX(1.012);">Hide Out Of Bounds</span>
<div class="a" style="left:1326.5px;top:569px;width:42.3px;height:18px;background:#ffffff;border:1px solid #d6d8e6;box-sizing:border-box;"></div>
<div class="a" style="left:1329.3px;top:571.6px;width:11.4px;height:12.8px;background:#ffffff;border:1px solid #dcdce4;box-sizing:border-box;"></div>
<span class="t" style="top:572.8px;line-height:14px;font-size:8px;color:#333;left:1347.5px;transform-origin:0 50%;transform:scaleX(0.838);">OFF</span>
<div class="a" style="left:1169.4px;top:598.5px;width:205.2px;height:154.5px;background:#ffffff;border:1px solid #d6d8e6;box-sizing:border-box;"></div>
<div class="a" style="left:1237.5px;top:598.5px;width:1px;height:24px;background:#d6d8e6;"></div>
<div class="a" style="left:1305.6px;top:598.5px;width:1px;height:24px;background:#d6d8e6;"></div>
<div class="a" style="left:1169.4px;top:622px;width:205.2px;height:1px;background:#d6d8e6;"></div>
<span class="t" style="top:604.6px;line-height:14px;font-size:10px;color:#1a1a1a;font-weight:bold;left:1175.2px;transform-origin:0 50%;transform:scaleX(0.991);">Lower Value</span>
<span class="t" style="top:604.6px;line-height:14px;font-size:10px;color:#1a1a1a;font-weight:bold;left:1255.8px;transform-origin:0 50%;">Colour</span>
<span class="t" style="top:604.6px;line-height:14px;font-size:10px;color:#1a1a1a;font-weight:bold;left:1311.6px;transform-origin:0 50%;transform:scaleX(1.010);">Upper Value</span>
<div class="a" style="left:1170.4px;top:640.73px;width:203.2px;height:1px;background:#e4e5ee;"></div>
<div class="a" style="left:1241.2px;top:624.8px;width:61.2px;height:14.8px;background:#f0666a;"></div>
<div class="a" style="left:1172px;top:623.6px;width:62.6px;height:17.63px;overflow:hidden">
<span class="t" style="top:3.115px;line-height:14px;font-size:10px;color:#1e1e1e;left:1.4px;transform-origin:0 50%;transform:scaleX(1.013);">0.0010000000</span>
</div>
<div class="a" style="left:1308px;top:623.6px;width:63.4px;height:17.63px;overflow:hidden">
<span class="t" style="top:3.115px;line-height:14px;font-size:10px;color:#1e1e1e;left:2px;transform-origin:0 50%;transform:scaleX(1.013);">0.2509375000</span>
</div>
<div class="a" style="left:1170.4px;top:659.36px;width:203.2px;height:1px;background:#e4e5ee;"></div>
<div class="a" style="left:1241.2px;top:643.43px;width:61.2px;height:14.8px;background:#f0a068;"></div>
<div class="a" style="left:1172px;top:642.23px;width:62.6px;height:17.63px;overflow:hidden">
<span class="t" style="top:3.115px;line-height:14px;font-size:10px;color:#1e1e1e;left:1.4px;transform-origin:0 50%;transform:scaleX(1.013);">0.2509375000</span>
</div>
<div class="a" style="left:1308px;top:642.23px;width:63.4px;height:17.63px;overflow:hidden">
<span class="t" style="top:3.115px;line-height:14px;font-size:10px;color:#1e1e1e;left:2px;transform-origin:0 50%;transform:scaleX(1.013);">0.5008750000</span>
</div>
<div class="a" style="left:1170.4px;top:677.99px;width:203.2px;height:1px;background:#e4e5ee;"></div>
<div class="a" style="left:1241.2px;top:662.06px;width:61.2px;height:14.8px;background:#f0e068;"></div>
<div class="a" style="left:1172px;top:660.86px;width:62.6px;height:17.63px;overflow:hidden">
<span class="t" style="top:3.115px;line-height:14px;font-size:10px;color:#1e1e1e;left:1.4px;transform-origin:0 50%;transform:scaleX(1.013);">0.5008750000</span>
</div>
<div class="a" style="left:1308px;top:660.86px;width:63.4px;height:17.63px;overflow:hidden">
<span class="t" style="top:3.115px;line-height:14px;font-size:10px;color:#1e1e1e;left:2px;transform-origin:0 50%;transform:scaleX(1.013);">0.7508125000</span>
</div>
<div class="a" style="left:1170.4px;top:696.62px;width:203.2px;height:1px;background:#e4e5ee;"></div>
<div class="a" style="left:1241.2px;top:680.69px;width:61.2px;height:14.8px;background:#a0f062;"></div>
<div class="a" style="left:1172px;top:679.49px;width:62.6px;height:17.63px;overflow:hidden">
<span class="t" style="top:3.115px;line-height:14px;font-size:10px;color:#1e1e1e;left:1.4px;transform-origin:0 50%;transform:scaleX(1.013);">0.7508125000</span>
</div>
<div class="a" style="left:1308px;top:679.49px;width:63.4px;height:17.63px;overflow:hidden">
<span class="t" style="top:3.115px;line-height:14px;font-size:10px;color:#1e1e1e;left:2px;transform-origin:0 50%;transform:scaleX(1.013);">1.0007500000</span>
</div>
<div class="a" style="left:1170.4px;top:715.25px;width:203.2px;height:1px;background:#e4e5ee;"></div>
<div class="a" style="left:1241.2px;top:699.32px;width:61.2px;height:14.8px;background:#68f0a0;"></div>
<div class="a" style="left:1172px;top:698.12px;width:62.6px;height:17.63px;overflow:hidden">
<span class="t" style="top:3.115px;line-height:14px;font-size:10px;color:#1e1e1e;left:1.4px;transform-origin:0 50%;transform:scaleX(1.013);">1.0007500000</span>
</div>
<div class="a" style="left:1308px;top:698.12px;width:63.4px;height:17.63px;overflow:hidden">
<span class="t" style="top:3.115px;line-height:14px;font-size:10px;color:#1e1e1e;left:2px;transform-origin:0 50%;transform:scaleX(1.013);">1.2506875000</span>
</div>
<div class="a" style="left:1170.4px;top:733.88px;width:203.2px;height:1px;background:#e4e5ee;"></div>
<div class="a" style="left:1241.2px;top:717.95px;width:61.2px;height:14.8px;background:#68c8f0;"></div>
<div class="a" style="left:1172px;top:716.75px;width:62.6px;height:17.63px;overflow:hidden">
<span class="t" style="top:3.115px;line-height:14px;font-size:10px;color:#1e1e1e;left:1.4px;transform-origin:0 50%;transform:scaleX(1.013);">1.2506875000</span>
</div>
<div class="a" style="left:1308px;top:716.75px;width:63.4px;height:17.63px;overflow:hidden">
<span class="t" style="top:3.115px;line-height:14px;font-size:10px;color:#1e1e1e;left:2px;transform-origin:0 50%;transform:scaleX(1.013);">1.5006250000</span>
</div>
<div class="a" style="left:1170.4px;top:752.51px;width:203.2px;height:1px;background:#e4e5ee;"></div>
<div class="a" style="left:1241.2px;top:736.58px;width:61.2px;height:14.8px;background:#8068f0;"></div>
<div class="a" style="left:1172px;top:735.38px;width:62.6px;height:17.63px;overflow:hidden">
<span class="t" style="top:3.115px;line-height:14px;font-size:10px;color:#1e1e1e;left:1.4px;transform-origin:0 50%;transform:scaleX(1.013);">1.5006250000</span>
</div>
<div class="a" style="left:1308px;top:735.38px;width:63.4px;height:17.63px;overflow:hidden">
<span class="t" style="top:3.115px;line-height:14px;font-size:10px;color:#1e1e1e;left:2px;transform-origin:0 50%;transform:scaleX(1.013);">1.7505625000</span>
</div>
<div class="a" style="left:1163.8px;top:753px;width:77.2px;height:20.5px;background:#ffffff;"></div>
<div class="a" style="left:1163.2px;top:750.5px;width:0.9px;height:23px;background:#666;"></div>
<svg class="a" style="left:1170px;top:755.6px;" width="13" height="13" viewBox="0 0 13 13"><rect width="13" height="13" fill="#7fb2d0"/><path d="M3.4,3.3H9.8M3.4,6.5H9.8M3.4,9.7H9.8" stroke="#fff" stroke-width="1.5"/></svg>
<div class="a" style="left:1187px;top:756px;width:50.5px;height:15px;overflow:hidden">
<span class="t" style="top:1.2px;line-height:14px;font-size:10px;color:#1e1e1e;left:0.5px;transform-origin:0 50%;transform:scaleX(1.043);">View Manager</span>
</div>
<div class="a" style="left:1241px;top:754.2px;width:76.8px;height:19.3px;background:#eeeeee;"></div>
<div class="a" style="left:1316.8px;top:754.2px;width:1px;height:19.3px;background:#b8b8b8;"></div>
<svg class="a" style="left:1247.6px;top:758px;" width="13" height="13" viewBox="0 0 13 13"><rect width="13" height="13" fill="#7fb2d0"/><path d="M3.4,3.3H9.8M3.4,6.5H9.8M3.4,9.7H9.8" stroke="#fff" stroke-width="1.5"/></svg>
<span class="t" style="top:758.8px;line-height:14px;font-size:10px;color:#1e1e1e;left:1265.2px;transform-origin:0 50%;">Properties</span>
<div class="a" style="left:1317.8px;top:754.2px;width:77.2px;height:19.3px;background:#eeeeee;"></div>
<div class="a" style="left:1394px;top:754.2px;width:1px;height:19.3px;background:#b8b8b8;"></div>
<svg class="a" style="left:1324.4px;top:758px;" width="13" height="13" viewBox="0 0 13 13"><rect width="13" height="13" fill="#7fb2d0"/><path d="M3.4,3.3H9.8M3.4,6.5H9.8M3.4,9.7H9.8" stroke="#fff" stroke-width="1.5"/></svg>
<span class="t" style="top:758.8px;line-height:14px;font-size:10px;color:#1e1e1e;left:1342px;transform-origin:0 50%;transform:scaleX(0.934);">Task Lists</span>
<svg class="a" style="left:0;top:0" width="1395" height="775" viewBox="0 0 1395 775">
<path d="M230,5.5H240V58.4H250.7L235,88.8L219.3,58.4H230Z" fill="#4ea233"/>
<rect x="220" y="91.5" width="30" height="31" fill="none" stroke="#4ea233" stroke-width="4"/>
<path d="M1078,307.4H1131V296.9L1162,312.6L1131,328.6V317.8H1078Z" fill="#4ea233"/>
<rect x="1164" y="287" width="215.5" height="51.6" fill="none" stroke="#4ea233" stroke-width="4"/>
</svg>
</body></html>
